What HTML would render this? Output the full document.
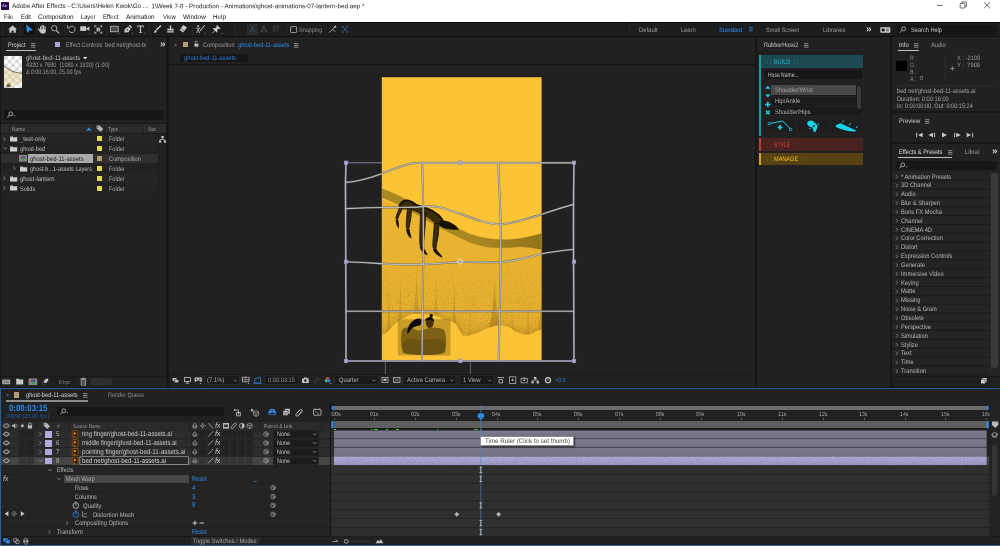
<!DOCTYPE html>
<html lang="en"><head><meta charset="utf-8"><title>Adobe After Effects</title>
<style>
html,body{margin:0;padding:0;background:#161616;}
body{width:1000px;height:546px;overflow:hidden;position:relative;font-family:"Liberation Sans",sans-serif;}
#app{position:absolute;left:0;top:0;width:1000px;height:546px;overflow:hidden;background:#161616;opacity:0.9999;}
#app div,#app svg{position:absolute;box-sizing:border-box;}
#app svg{overflow:visible;}
.t{white-space:nowrap;line-height:10px;height:10px;letter-spacing:0;transform-origin:0 50%;}
</style></head><body><div id="app">
<div style="left:0px;top:0px;width:1000px;height:22.3px;background:#ffffff;"></div>
<div style="left:1px;top:1.9px;width:8px;height:7.9px;background:#2a0a4a;border-radius:0.6px;"></div>
<div class="t" style="left:2.4px;top:1.1px;font-size:4.4px;color:#c9a6ff;transform:scaleX(0.8889) rotate(0.05deg);font-weight:bold;">Ae</div>
<div class="t" style="left:12.4px;top:1.05px;font-size:6.5px;color:#1a1a1a;transform:scaleX(0.9664) rotate(0.05deg);">Adobe After Effects - C:\Users\Helen Kwok\Go ...&nbsp; 1\Week 7-8 - Production - Animations\ghost-animations-07-lantern-bed.aep *</div>
<svg style="left:0px;top:0px;" width="1000" height="12" viewBox="0 0 1000 12"><path d="M937 5.4h5.6" stroke="#222" stroke-width="0.7" fill="none"/><rect x="960.2" y="3.3" width="4.7" height="4.7" rx="0.5" fill="none" stroke="#222" stroke-width="0.65"/><path d="M961.6 3.3v-1q0-.4 .4-.4h4q.4 0 .4 .4v4q0 .4-.4 .4h-1" fill="none" stroke="#222" stroke-width="0.65"/><path d="M984.2 2.5l5.6 5.6M989.8 2.5l-5.600 5.600" stroke="#222" stroke-width="0.7" fill="none"/></svg>
<div class="t" style="left:3.75px;top:12.4px;font-size:6.7px;color:#111;transform:scaleX(0.8336) rotate(0.05deg);">File</div>
<div class="t" style="left:20.6px;top:12.4px;font-size:6.7px;color:#111;transform:scaleX(0.8661) rotate(0.05deg);">Edit</div>
<div class="t" style="left:38.1px;top:12.4px;font-size:6.7px;color:#111;transform:scaleX(0.9573) rotate(0.05deg);">Composition</div>
<div class="t" style="left:81.25px;top:12.4px;font-size:6.7px;color:#111;transform:scaleX(0.8562) rotate(0.05deg);">Layer</div>
<div class="t" style="left:103.1px;top:12.4px;font-size:6.7px;color:#111;transform:scaleX(0.9054) rotate(0.05deg);">Effect</div>
<div class="t" style="left:126.25px;top:12.4px;font-size:6.7px;color:#111;transform:scaleX(0.9650) rotate(0.05deg);">Animation</div>
<div class="t" style="left:162.9px;top:12.4px;font-size:6.7px;color:#111;transform:scaleX(0.8818) rotate(0.05deg);">View</div>
<div class="t" style="left:182.75px;top:12.4px;font-size:6.7px;color:#111;transform:scaleX(0.9589) rotate(0.05deg);">Window</div>
<div class="t" style="left:213.1px;top:12.4px;font-size:6.7px;color:#111;transform:scaleX(0.9361) rotate(0.05deg);">Help</div>
<div style="left:0px;top:22.3px;width:1000px;height:14.4px;background:#1d1d1d;"></div>
<div style="left:0px;top:22px;width:1000px;height:1px;background:#0e0e0e;opacity:1.00;"></div>
<div style="left:0px;top:36px;width:1000px;height:1px;background:#101010;"></div>
<div style="left:24.2px;top:24.2px;width:10.6px;height:10.8px;background:#111111;"></div>
<div style="left:3px;top:24.6px;width:1px;height:10px;background:#2e2e2e;opacity:0.69;"></div>
<div style="left:20px;top:24.6px;width:1px;height:10px;background:#2e2e2e;opacity:0.69;"></div>
<div style="left:64px;top:24.6px;width:1px;height:10px;background:#2e2e2e;opacity:0.69;"></div>
<div style="left:106px;top:24.6px;width:1px;height:10px;background:#2e2e2e;opacity:0.69;"></div>
<div style="left:149px;top:24.6px;width:1px;height:10px;background:#2e2e2e;opacity:0.69;"></div>
<div style="left:192px;top:24.6px;width:1px;height:10px;background:#2e2e2e;opacity:0.69;"></div>
<div style="left:209px;top:24.6px;width:1px;height:10px;background:#2e2e2e;opacity:0.69;"></div>
<div style="left:235px;top:24.6px;width:1px;height:10px;background:#2e2e2e;opacity:0.69;"></div>
<div style="left:286px;top:24.6px;width:1px;height:10px;background:#2e2e2e;opacity:0.69;"></div>
<div style="left:246.8px;top:24.2px;width:11.2px;height:10.8px;background:#2a2a2a;"></div>
<svg style="left:0;top:0" width="1000" height="40" viewBox="0 0 1000 40"><path d="M8.2 29.2l4.4-3.8 4.4 3.8h-1.2v3.6h-2.2v-2.4h-2v2.4h-2.2v-3.6z" fill="#c8c8c8"/><path d="M26.1 24.6L27 33l2.500-2.500 3.800-.2z" fill="#2d8ceb"/><path d="M40.6 30v-3.600M42.100 30v-4.800M43.600 30v-4.600M45.100 30.400v-3.600" stroke="#c8c8c8" stroke-width="1.05" stroke-linecap="round" fill="none"/><path d="M38.500 28.900l1.900 2.700" stroke="#c8c8c8" stroke-width="1.2" stroke-linecap="round"/><path d="M40 29.400h5.700v2.200c0 1-.8 1.900-1.900 1.900h-1.700c-.8 0-1.400-.4-1.800-1z" fill="#c8c8c8"/><circle cx="54.2" cy="28.2" r="2.7" fill="none" stroke="#c8c8c8" stroke-width="0.8"/><path d="M56.2 30.3l3 3.1" stroke="#c8c8c8" stroke-width="1.1"/><path d="M69.6 27.2a3.2 3.2 0 1 1-0.6 3.6" fill="none" stroke="#c8c8c8" stroke-width="0.8"/><path d="M67.6 25.4v2.6h2.6" fill="none" stroke="#c8c8c8" stroke-width="0.8"/><rect x="80.2" y="26.2" width="6" height="4.8" rx="0.8" fill="#c8c8c8"/><path d="M86.4 28.4l3-1.8v4.2l-3-1.6z" fill="#c8c8c8"/><path d="M88.6 33.6h1.2v-1.2z" fill="#999"/><path d="M94.4 25.6h2v.8h-1.2v1.2h-.8zM100.2 25.6h2v2h-.8v-1.2h-1.2zM94.4 31.4h.8v1.2h1.2v.8h-2zM101.4 31.4h.8v2h-2v-.8h1.2z" fill="#c8c8c8"/><path d="M96.4 27.6h3.8v3.8h-3.8z" fill="#c8c8c8" opacity="0.8"/><rect x="110.6" y="26.2" width="7.6" height="5.6" fill="#4a4a4a" stroke="#c8c8c8" stroke-width="0.7"/><path d="M118.2 33.8h1.2v-1.2z" fill="#999"/><path d="M124.2 32.6l.6-3.6 3.4-2.6 2.6 2.6-2.6 3.2zM128.8 25.8l1-1 2.4 2.4-1 1z" fill="#c8c8c8"/><circle cx="127.2" cy="29.8" r="0.7" fill="#1d1d1d"/><path d="M131.6 33.8h1.2v-1.2z" fill="#999"/><path d="M137.2 25.6h6.6v1.8h-.7v-1h-2v5.6h1v.7h-3.2v-.7h1v-5.6h-2v1h-.7z" fill="#c8c8c8"/><path d="M144.4 33.8h1.2v-1.2z" fill="#999"/><path d="M160.4 25l1 1-4.4 4.6-1.2-1.2z" fill="#c8c8c8"/><path d="M155.4 29.8l1.4 1.4c-.4 1.4-1.8 1.8-3.2 1.6 1-.6.8-2.2 1.8-3z" fill="#c8c8c8"/><path d="M169.6 25.4h1.8l-.3 3.4h2.6v1.6h-6.4v-1.6h2.6zM167.2 31.2h6.6v1.2h-6.6z" fill="#c8c8c8"/><path d="M183.4 25l3.6 2.6-3.8 5-3.6-2.6z" fill="#c8c8c8"/><path d="M181.2 28.6l3.4 2.6" stroke="#1d1d1d" stroke-width="0.5"/><circle cx="198.2" cy="26" r="0.9" fill="#c8c8c8"/><path d="M195.8 28.2h4l-1.2.6v1.6l1 2.6M198.2 29l-1.6 4" stroke="#c8c8c8" stroke-width="0.8" fill="none"/><path d="M204.4 25l.6.6-4.2 5.2-1.2.6.4-1.2z" fill="#c8c8c8"/><path d="M204.4 33.8h1.2v-1.2z" fill="#999"/><path d="M217 25l3.6 3.6-.8.4-1-.4-1.6 1.6.2 1.8-.6.6-1.8-1.8-2.4 2.4-.4-.4 2.4-2.4-1.8-1.8.6-.6 1.8.2 1.6-1.6-.4-1z" fill="#c8c8c8"/><path d="M221.6 33.8h1.2v-1.2z" fill="#999"/><path d="M252.4 26v3.6l-3 2.4M252.4 29.6l3 2.4" stroke="#2a5f94" stroke-width="0.8" fill="none"/><path d="M263.8 25.6l-3.2 6.2h6.4zM263.8 29.4v-3.6M263.8 29.4l-3 2.2M263.8 29.4l3 2.2" stroke="#4a4a4a" stroke-width="0.7" fill="none"/><path d="M273.4 26.2h4.6v4.6h-4.6zM275.4 28.4l3.6-3M275.4 28.4l-2.4 3.6" stroke="#4a4a4a" stroke-width="0.7" fill="none"/><rect x="290.6" y="26.6" width="6" height="6" rx="0.8" fill="none" stroke="#b8b8b8" stroke-width="0.8"/><path d="M329.2 32.6l3.4-3.4 2.6 2.6M332.6 29.2l2.8-2.8" stroke="#c8c8c8" stroke-width="0.8" fill="none"/><rect x="334.4" y="25.8" width="1.8" height="1.8" fill="#c8c8c8"/><path d="M342.2 26.4h1.6M342.2 26.4v1.4M347.8 26.4h-1.6M347.8 26.4v1.4M342.2 32.2h1.6M342.2 32.2v-1.4M347.8 32.2h-1.6M347.8 32.2v-1.4M343.6 27.6l2.8 3.4M346.4 27.6l-2.8 3.4" stroke="#2a6fb5" stroke-width="0.8" fill="none"/></svg>
<div class="t" style="left:299.4px;top:24.8px;font-size:6.6px;color:#8a8a8a;transform:scaleX(0.8389) rotate(0.05deg);">Snapping</div>
<div style="left:626px;top:23.2px;width:1px;height:12.8px;background:#161616;"></div>
<div class="t" style="left:638.6px;top:24.9px;font-size:6.4px;color:#9a9a9a;transform:scaleX(0.9172) rotate(0.05deg);">Default</div>
<div class="t" style="left:681.2px;top:24.9px;font-size:6.4px;color:#9a9a9a;transform:scaleX(0.8919) rotate(0.05deg);">Learn</div>
<div class="t" style="left:718.9px;top:24.9px;font-size:6.4px;color:#2d8ceb;transform:scaleX(0.8970) rotate(0.05deg);">Standard</div>
<svg style="left:749.4px;top:27.4px;" width="4" height="4.4" viewBox="0 0 4 4.4"><path d="M0 .5h3.8M0 2.2h3.8M0 3.9h3.8" stroke="#2d8ceb" stroke-width="0.7"/></svg>
<div class="t" style="left:765.6px;top:24.9px;font-size:6.4px;color:#9a9a9a;transform:scaleX(0.8776) rotate(0.05deg);">Small Screen</div>
<div class="t" style="left:822.8px;top:24.9px;font-size:6.4px;color:#9a9a9a;transform:scaleX(0.9208) rotate(0.05deg);">Libraries</div>
<div class="t" style="left:866.4px;top:23.9px;font-size:10px;color:#d8d8d8;transform:scaleX(1.0067) rotate(0.05deg);font-weight:bold;">&#187;</div>
<svg style="left:880px;top:26.6px;" width="10.6" height="6" viewBox="0 0 10.6 6"><rect x="0.3" y="0.3" width="10" height="5.4" rx="0.6" fill="#d0d0d0"/><rect x="1.6" y="1.6" width="3.2" height="2.8" fill="#1d1d1d"/><path d="M6 2h3M6 3.8h3" stroke="#1d1d1d" stroke-width="0.7"/></svg>
<div style="left:896.6px;top:24.6px;width:100.4px;height:10.2px;background:#161616;border-radius:1px;"></div>
<svg style="left:899.4px;top:26.4px;" width="8" height="7" viewBox="0 0 8 7"><circle cx="4.6" cy="2.8" r="2" fill="none" stroke="#c0c0c0" stroke-width="0.8"/><path d="M3.2 4.2l-2.4 2.4" stroke="#c0c0c0" stroke-width="0.9"/></svg>
<div class="t" style="left:911.2px;top:24.9px;font-size:6.6px;color:#c4c4c4;transform:scaleX(0.8535) rotate(0.05deg);">Search Help</div>
<div style="left:1px;top:37.2px;width:165.4px;height:350.2px;background:#212121;"></div>
<div class="t" style="left:7.8px;top:39.8px;font-size:6.6px;color:#d8d8d8;transform:scaleX(0.8519) rotate(0.05deg);">Project</div>
<div style="left:6.2px;top:50px;width:29.6px;height:1px;background:#d0d0d0;opacity:0.92;"></div>
<svg style="left:31px;top:42.6px;" width="5" height="5" viewBox="0 0 5 5"><path d="M0 .7h4.400M0 2.450h4.400M0 4.200h4.400" stroke="#a4a4a4" stroke-width="0.800"/></svg>
<div style="left:54.6px;top:41.6px;width:5.6px;height:5.6px;background:#a9a6d6;"></div>
<div class="t" style="left:65.8px;top:39.8px;font-size:6.6px;color:#9a9a9a;transform:scaleX(0.8386) rotate(0.05deg);">Effect Controls</div>
<div style="left:105px;top:39.8px;width:41.2px;height:10px;overflow:hidden;"><div class="t" style="left:0;top:0;font-size:6.6px;color:#9a9a9a;transform:scaleX(0.8801) rotate(0.05deg);">bed net/ghost-be</div></div>
<div style="left:146px;top:39.4px;width:1px;height:10.4px;background:#333;opacity:0.57;"></div>
<div class="t" style="left:159.8px;top:38.9px;font-size:10px;color:#d8d8d8;transform:scaleX(1.0067) rotate(0.05deg);font-weight:bold;">&#187;</div>
<svg style="left:4.1px;top:55.8px;overflow:hidden" width="18.4" height="32.6" viewBox="0 0 18.4 32.6"><rect width="18.4" height="32.6" fill="#fff"/><rect x="0" y="0" width="3.7" height="3.7" fill="#d8d8d8"/><rect x="7.4" y="0" width="3.7" height="3.7" fill="#d8d8d8"/><rect x="14.8" y="0" width="3.7" height="3.7" fill="#d8d8d8"/><rect x="3.7" y="3.7" width="3.7" height="3.7" fill="#d8d8d8"/><rect x="11.1" y="3.7" width="3.7" height="3.7" fill="#d8d8d8"/><rect x="0" y="7.4" width="3.7" height="3.7" fill="#d8d8d8"/><rect x="7.4" y="7.4" width="3.7" height="3.7" fill="#d8d8d8"/><rect x="14.8" y="7.4" width="3.7" height="3.7" fill="#d8d8d8"/><rect x="3.7" y="11.1" width="3.7" height="3.7" fill="#d8d8d8"/><rect x="11.1" y="11.1" width="3.7" height="3.7" fill="#d8d8d8"/><rect x="0" y="14.8" width="3.7" height="3.7" fill="#d8d8d8"/><rect x="7.4" y="14.8" width="3.7" height="3.7" fill="#d8d8d8"/><rect x="14.8" y="14.8" width="3.7" height="3.7" fill="#d8d8d8"/><rect x="3.7" y="18.5" width="3.7" height="3.7" fill="#d8d8d8"/><rect x="11.1" y="18.5" width="3.7" height="3.7" fill="#d8d8d8"/><rect x="0" y="22.2" width="3.7" height="3.7" fill="#d8d8d8"/><rect x="7.4" y="22.2" width="3.7" height="3.7" fill="#d8d8d8"/><rect x="14.8" y="22.2" width="3.7" height="3.7" fill="#d8d8d8"/><rect x="3.7" y="25.9" width="3.7" height="3.7" fill="#d8d8d8"/><rect x="11.1" y="25.9" width="3.7" height="3.7" fill="#d8d8d8"/><rect x="0" y="29.6" width="3.7" height="3.7" fill="#d8d8d8"/><rect x="7.4" y="29.6" width="3.7" height="3.7" fill="#d8d8d8"/><rect x="14.8" y="29.6" width="3.7" height="3.7" fill="#d8d8d8"/><path d="M0 10.400C4 12.800 7 15.200 10 16C13 16.800 16 17.200 18.400 17.600V26C16 29.600 13 27.600 11 28.400C9 30 7 30.400 4 29.600L0 30.400Z" fill="#e2cf98" opacity="0.5"/><path d="M0 10.200C4 12.600 7 15 10 15.800C13 16.600 16 17 18.400 17.400" stroke="#5a4a20" stroke-width="0.9" fill="none" opacity="0.85"/><path d="M2.400 31.200c0-2.600 1-3.800 2.200-3.800s2.200 1.200 2.200 3.800z" fill="#5a4a1e" opacity="0.85"/></svg>
<div class="t" style="left:25.8px;top:53.2px;font-size:6.7px;color:#c0c0c0;transform:scaleX(0.8963) rotate(0.05deg);">ghost-bed-11-assets</div>
<svg style="left:83.2px;top:56.6px;" width="4.4" height="3" viewBox="0 0 4.4 3"><path d="M0 0h4.2l-2.1 2.6z" fill="#e0e0e0"/></svg>
<div class="t" style="left:25.8px;top:59.7px;font-size:6.5px;color:#9c9c9c;transform:scaleX(0.8505) rotate(0.05deg);">4320 x 7680&nbsp; (1080 x 1920) (1.00)</div>
<div class="t" style="left:25.8px;top:66.8px;font-size:6.5px;color:#9c9c9c;transform:scaleX(0.8255) rotate(0.05deg);">&#916; 0:00:16:00, 25.00 fps</div>
<div style="left:4px;top:110.2px;width:159.4px;height:9.4px;background:#161616;border-radius:1px;"></div>
<svg style="left:7.4px;top:111.4px;" width="9" height="7" viewBox="0 0 9 7"><circle cx="3.8" cy="2.8" r="1.9" fill="none" stroke="#c0c0c0" stroke-width="0.8"/><path d="M2.4 4.2l-2 2.2" stroke="#c0c0c0" stroke-width="0.9"/><path d="M6.4 4.4h2l-1 1.2z" fill="#c0c0c0"/></svg>
<div style="left:1px;top:123px;width:165.4px;height:1px;background:#161616;opacity:0.69;"></div>
<div style="left:1px;top:123.8px;width:165.4px;height:9.6px;background:#2b2b2b;"></div>
<div style="left:1px;top:133px;width:165.4px;height:1px;background:#161616;opacity:0.69;"></div>
<div style="left:9px;top:124.6px;width:1px;height:8px;background:#1a1a1a;opacity:0.57;"></div>
<div style="left:94px;top:124.6px;width:1px;height:8px;background:#1a1a1a;opacity:0.57;"></div>
<div style="left:104px;top:124.6px;width:1px;height:8px;background:#1a1a1a;opacity:0.57;"></div>
<div style="left:143px;top:124.6px;width:1px;height:8px;background:#1a1a1a;opacity:0.57;"></div>
<div class="t" style="left:11.7px;top:124px;font-size:5.8px;color:#9a9a9a;transform:scaleX(0.8596) rotate(0.05deg);">Name</div>
<svg style="left:85.6px;top:126.6px;" width="6" height="4" viewBox="0 0 6 4"><path d="M0 3.4l2.8-3 2.8 3z" fill="#2d8ceb"/></svg>
<svg style="left:95.6px;top:125.2px;" width="8" height="7" viewBox="0 0 8 7"><path d="M0.6 0.6h3l3.6 3.4-2.6 2.8-4-3.6z" fill="#b8b8b8"/><circle cx="1.9" cy="1.9" r="0.6" fill="#2b2b2b"/></svg>
<div class="t" style="left:107.6px;top:124px;font-size:5.8px;color:#9a9a9a;transform:scaleX(0.8271) rotate(0.05deg);">Type</div>
<div class="t" style="left:122.4px;top:124.6px;font-size:5.6px;color:#2d6fb0;transform:scaleX(0.8850) rotate(0.05deg);">.</div>
<div class="t" style="left:147.8px;top:124px;font-size:5.8px;color:#9a9a9a;transform:scaleX(0.7179) rotate(0.05deg);">Size</div>
<div class="t" style="left:160.4px;top:124.6px;font-size:5.6px;color:#2d6fb0;transform:scaleX(0.8850) rotate(0.05deg);">.</div>
<div style="left:1px;top:134px;width:157px;height:9.4px;background:#252525;"></div>
<svg style="left:3.4px;top:136.75px;" width="3" height="5" viewBox="0 0 3 5"><path d="M0.4 0.4l1.8 1.8-1.8 1.8" stroke="#9a9a9a" stroke-width="0.7" fill="none"/></svg>
<svg style="left:9.8px;top:135.95px;" width="8" height="6" viewBox="0 0 8 6"><path d="M0 .4h2.8l.6.8h3.8v4.4h-7.2z" fill="#cfcfcf"/><path d="M0 1.6h7.2" stroke="#9a9a9a" stroke-width="0.4"/></svg>
<div class="t" style="left:19.8px;top:134.15px;font-size:6.6px;color:#bcbcbc;transform:scaleX(0.9017) rotate(0.05deg);">_test-only</div>
<div style="left:97.2px;top:136.2px;width:5.2px;height:5.2px;background:#e4d84c;"></div>
<div class="t" style="left:108.85px;top:134.15px;font-size:6.6px;color:#aaaaaa;transform:scaleX(0.8365) rotate(0.05deg);">Folder</div>
<div style="left:1px;top:143.9px;width:157px;height:9.4px;background:#222222;"></div>
<svg style="left:3px;top:147.45px;" width="5" height="3" viewBox="0 0 5 3"><path d="M0.4 0.4l1.8 1.8 1.8-1.8" stroke="#9a9a9a" stroke-width="0.7" fill="none"/></svg>
<svg style="left:9.8px;top:145.85px;" width="8" height="6" viewBox="0 0 8 6"><path d="M0 .4h2.8l.6.8h3.8v4.4h-7.2z" fill="#cfcfcf"/><path d="M0 1.6h7.2" stroke="#9a9a9a" stroke-width="0.4"/></svg>
<div class="t" style="left:19.8px;top:144.05px;font-size:6.6px;color:#bcbcbc;transform:scaleX(0.8618) rotate(0.05deg);">ghost-bed</div>
<div style="left:97.2px;top:146.1px;width:5.2px;height:5.2px;background:#e4d84c;"></div>
<div class="t" style="left:108.85px;top:144.05px;font-size:6.6px;color:#aaaaaa;transform:scaleX(0.8365) rotate(0.05deg);">Folder</div>
<div style="left:1px;top:153.8px;width:157px;height:9.4px;background:#252525;"></div>
<div style="left:1px;top:153.8px;width:157px;height:9.4px;background:#2f2f2f;"></div>
<div style="left:28px;top:154px;width:65.4px;height:9px;background:#aaaaaa;"></div>
<svg style="left:19.4px;top:155.4px;" width="8" height="6.4" viewBox="0 0 8 6.4"><rect width="8" height="6.4" rx="0.6" fill="#8c8c8c"/><circle cx="3" cy="2.6" r="1.4" fill="#d03030"/><circle cx="5" cy="2.6" r="1.4" fill="#3050d0"/><circle cx="4" cy="4.2" r="1.4" fill="#30a040"/></svg>
<div class="t" style="left:30.1px;top:153.95px;font-size:6.6px;color:#1a1a1a;transform:scaleX(0.9015) rotate(0.05deg);">ghost-bed-11-assets</div>
<div style="left:97.2px;top:156px;width:5.2px;height:5.2px;background:#b59e76;"></div>
<div class="t" style="left:108.85px;top:153.95px;font-size:6.6px;color:#aaaaaa;transform:scaleX(0.8737) rotate(0.05deg);">Composition</div>
<div style="left:1px;top:163.7px;width:157px;height:9.4px;background:#222222;"></div>
<svg style="left:13.4px;top:166.45px;" width="3" height="5" viewBox="0 0 3 5"><path d="M0.4 0.4l1.8 1.8-1.8 1.8" stroke="#9a9a9a" stroke-width="0.7" fill="none"/></svg>
<svg style="left:19.8px;top:165.65px;" width="8" height="6" viewBox="0 0 8 6"><path d="M0 .4h2.8l.6.8h3.8v4.4h-7.2z" fill="#cfcfcf"/><path d="M0 1.6h7.2" stroke="#9a9a9a" stroke-width="0.4"/></svg>
<div class="t" style="left:30.1px;top:163.85px;font-size:6.6px;color:#bcbcbc;transform:scaleX(0.8367) rotate(0.05deg);">ghost-b...1-assets Layers</div>
<div style="left:97.2px;top:165.9px;width:5.2px;height:5.2px;background:#e4d84c;"></div>
<div class="t" style="left:108.85px;top:163.85px;font-size:6.6px;color:#aaaaaa;transform:scaleX(0.8365) rotate(0.05deg);">Folder</div>
<div style="left:1px;top:173.6px;width:157px;height:9.4px;background:#252525;"></div>
<svg style="left:3.4px;top:176.35px;" width="3" height="5" viewBox="0 0 3 5"><path d="M0.4 0.4l1.8 1.8-1.8 1.8" stroke="#9a9a9a" stroke-width="0.7" fill="none"/></svg>
<svg style="left:9.8px;top:175.55px;" width="8" height="6" viewBox="0 0 8 6"><path d="M0 .4h2.8l.6.8h3.8v4.4h-7.2z" fill="#cfcfcf"/><path d="M0 1.6h7.2" stroke="#9a9a9a" stroke-width="0.4"/></svg>
<div class="t" style="left:19.8px;top:173.75px;font-size:6.6px;color:#bcbcbc;transform:scaleX(0.8942) rotate(0.05deg);">ghost-lantern</div>
<div style="left:97.2px;top:175.8px;width:5.2px;height:5.2px;background:#e4d84c;"></div>
<div class="t" style="left:108.85px;top:173.75px;font-size:6.6px;color:#aaaaaa;transform:scaleX(0.8365) rotate(0.05deg);">Folder</div>
<div style="left:1px;top:183.5px;width:157px;height:9.4px;background:#222222;"></div>
<svg style="left:3.4px;top:186.25px;" width="3" height="5" viewBox="0 0 3 5"><path d="M0.4 0.4l1.8 1.8-1.8 1.8" stroke="#9a9a9a" stroke-width="0.7" fill="none"/></svg>
<svg style="left:9.8px;top:185.45px;" width="8" height="6" viewBox="0 0 8 6"><path d="M0 .4h2.8l.6.8h3.8v4.4h-7.2z" fill="#cfcfcf"/><path d="M0 1.6h7.2" stroke="#9a9a9a" stroke-width="0.4"/></svg>
<div class="t" style="left:19.8px;top:183.65px;font-size:6.6px;color:#bcbcbc;transform:scaleX(0.8455) rotate(0.05deg);">Solids</div>
<div style="left:97.2px;top:185.7px;width:5.2px;height:5.2px;background:#e4d84c;"></div>
<div class="t" style="left:108.85px;top:183.65px;font-size:6.6px;color:#aaaaaa;transform:scaleX(0.8365) rotate(0.05deg);">Folder</div>
<svg style="left:158.6px;top:135.6px;" width="7" height="7" viewBox="0 0 7 7"><rect x="2.4" y="0" width="2.2" height="2.2" fill="#c8c8c8"/><rect x="0" y="4.4" width="2.2" height="2.2" fill="#c8c8c8"/><rect x="4.8" y="4.4" width="2.2" height="2.2" fill="#c8c8c8"/><path d="M3.5 2v1.6M1.1 4.4v-.9h4.8v.9" stroke="#c8c8c8" stroke-width="0.6" fill="none"/></svg>
<div style="left:158px;top:134px;width:1px;height:246px;background:#1c1c1c;opacity:0.57;"></div>
<div style="left:1px;top:376px;width:165.4px;height:1px;background:#161616;opacity:0.69;"></div>
<svg style="left:0;top:0" width="170" height="390" viewBox="0 0 170 390"><rect x="2.2" y="379.6" width="8" height="4.6" rx="1" fill="#a8a8a8"/><path d="M3.4 381h5.6M3.4 382.6h5.6" stroke="#444" stroke-width="0.5"/><path d="M16.2 378.8h2.6l.6.8h3.8v4.8h-7z" fill="#c8c8c8"/><rect x="28.6" y="378.6" width="8.6" height="6.4" rx="0.6" fill="#8c8c8c"/><circle cx="32" cy="381" r="1.4" fill="#d03030"/><circle cx="34" cy="381" r="1.4" fill="#3050d0"/><circle cx="33" cy="382.8" r="1.4" fill="#30a040"/><path d="M47.6 378.4c-2 .2-3.4 1.6-4 3.4l1.4 1.4c1.8-.6 3.2-2 3.4-4zM43 382.4l-1.2.4.8.8zM44.6 384l-.4 1.2.8-.8z" fill="#c8c8c8"/><rect x="53.4" y="378.2" width="23.4" height="7.4" fill="#1e1e1e"/><path d="M81.2 379.4h4.4v5.8h-4.4zM80.6 378.8h5.6M82.4 378.2h2" fill="none" stroke="#b8b8b8" stroke-width="0.8"/><path d="M82.4 380.4v3.8M83.4 380.4v3.8M84.4 380.4v3.8" stroke="#b8b8b8" stroke-width="0.4"/><rect x="91" y="378" width="21.6" height="7.6" rx="3.8" fill="#2e2e2e"/></svg>
<div class="t" style="left:58.6px;top:377.2px;font-size:5.4px;color:#8a8a8a;transform:scaleX(0.8850) rotate(0.05deg);">8 bpc</div>
<div class="t" style="left:74px;top:377.8px;font-size:5.4px;color:#2d6fb0;transform:scaleX(0.8850) rotate(0.05deg);">.</div>
<div style="left:168.8px;top:37.2px;width:586.2px;height:350.2px;background:#212121;"></div>
<div class="t" style="left:174.4px;top:39.6px;font-size:6px;color:#8a8a8a;transform:scaleX(0.8850) rotate(0.05deg);">&#215;</div>
<div style="left:182.8px;top:41.6px;width:5.4px;height:5.6px;background:#b59e76;"></div>
<svg style="left:193.6px;top:41.2px;" width="5" height="6" viewBox="0 0 5 6"><rect x="0.4" y="2.6" width="4" height="3" fill="#c0c0c0"/><path d="M1.2 2.6v-1.2a1.2 1.2 0 0 1 2.4 0" fill="none" stroke="#c0c0c0" stroke-width="0.7"/></svg>
<div class="t" style="left:203.1px;top:39.8px;font-size:6.6px;color:#9a9a9a;transform:scaleX(0.8614) rotate(0.05deg);">Composition</div>
<div class="t" style="left:237.5px;top:39.8px;font-size:6.6px;color:#2d8ceb;transform:scaleX(0.8630) rotate(0.05deg);">ghost-bed-11-assets</div>
<svg style="left:294.4px;top:42.6px;" width="5" height="5" viewBox="0 0 5 5"><path d="M0 .7h4.400M0 2.450h4.400M0 4.200h4.400" stroke="#a4a4a4" stroke-width="0.800"/></svg>
<div style="left:180px;top:53.8px;width:68px;height:8.6px;background:#161616;"></div>
<div class="t" style="left:184px;top:53.2px;font-size:6.6px;color:#2d7fd8;transform:scaleX(0.8714) rotate(0.05deg);">ghost-bed-11-assets</div>
<div style="left:168.8px;top:64px;width:586.2px;height:1px;background:#111;opacity:0.80;"></div>
<svg style="left:0;top:0" width="1000" height="390" viewBox="0 0 1000 390"><rect x="381.8" y="77.2" width="159.8" height="283.2" fill="#fdc337"/><defs><clipPath id="cy"><rect x="381.8" y="77.2" width="159.8" height="283.2"/></clipPath><clipPath id="cn"><path d="M381.8 199 L398.6 206 L436 225 L462.4 237 L480 243.6 L502 245.8 L524 244.8 L541.6 249 L541.6 329.6 C539 330.4 537 331 535.5 331.5 C531 334.4 527 335.4 523.5 334.5 C520 333.6 518 332.6 515.4 331.5 C512 329 510 327.4 507 326.5 C504 325.4 501 325.2 498 325.5 C495 325.8 492 326.4 489 327.5 C484 329.6 480 332.4 475 333.5 C471 335.6 467 336.4 463 335.5 C460 333 458 327 455.5 323.5 C452 320.6 448 319.8 443.5 319.4 C440 317 438 316 435.4 315.4 C428 313.6 420 313.4 413 313.8 C410 314.6 408 316 405 317.4 C401 319 398 321 395 323.5 C391 328 387 333 381.8 335.5 Z"/></clipPath><linearGradient id="netg" gradientUnits="userSpaceOnUse" x1="0" y1="200" x2="0" y2="335"><stop offset="0" stop-color="#7a5a08" stop-opacity="0.13"/><stop offset="0.45" stop-color="#7a5a08" stop-opacity="0.15"/><stop offset="1" stop-color="#7a5a08" stop-opacity="0.2"/></linearGradient><linearGradient id="spg" gradientUnits="userSpaceOnUse" x1="0" y1="200" x2="0" y2="335"><stop offset="0" stop-color="#fff" stop-opacity="0.06"/><stop offset="0.42" stop-color="#fff" stop-opacity="0.2"/><stop offset="0.6" stop-color="#fff" stop-opacity="0.7"/><stop offset="1" stop-color="#fff" stop-opacity="1"/></linearGradient><mask id="spm" maskUnits="userSpaceOnUse" x="380" y="180" width="164" height="182"><rect x="380" y="180" width="164" height="182" fill="url(#spg)"/></mask><filter id="spk" x="0" y="0" width="100%" height="100%" color-interpolation-filters="sRGB"><feTurbulence type="fractalNoise" baseFrequency="1.6" numOctaves="1" seed="7" result="n"/><feColorMatrix in="n" type="matrix" values="0 0 0 0 0.30  0 0 0 0 0.21  0 0 0 0 0.02  -6 0 0 0 2.85"/></filter></defs><g clip-path="url(#cy)"><path d="M381.8 199 L398.6 206 L436 225 L462.4 237 L480 243.6 L502 245.8 L524 244.8 L541.6 249 L541.6 329.6 C539 330.4 537 331 535.5 331.5 C531 334.4 527 335.4 523.5 334.5 C520 333.6 518 332.6 515.4 331.5 C512 329 510 327.4 507 326.5 C504 325.4 501 325.2 498 325.5 C495 325.8 492 326.4 489 327.5 C484 329.6 480 332.4 475 333.5 C471 335.6 467 336.4 463 335.5 C460 333 458 327 455.5 323.5 C452 320.6 448 319.8 443.5 319.4 C440 317 438 316 435.4 315.4 C428 313.6 420 313.4 413 313.8 C410 314.6 408 316 405 317.4 C401 319 398 321 395 323.5 C391 328 387 333 381.8 335.5 Z" fill="url(#netg)"/><path d="M389.0 274 C389.3 310.0 390.5 326 391.5 334 L386.5 334 C387.5 326 388.7 310.0 389.0 274 Z" fill="#6e520a" opacity="0.16" clip-path="url(#cn)"/><path d="M400.6 270 C400.90000000000003 301.2 402.1 314 403.1 322 L398.1 322 C399.1 314 400.3 301.2 400.6 270 Z" fill="#6e520a" opacity="0.16" clip-path="url(#cn)"/><path d="M416.6 265 C416.90000000000003 295.6 418.70000000000005 308 420.1 316 L413.1 316 C414.5 308 416.3 295.6 416.6 265 Z" fill="#6e520a" opacity="0.2" clip-path="url(#cn)"/><path d="M436.0 276 C436.3 300.6 437.5 309 438.5 317 L433.5 317 C434.5 309 435.7 300.6 436.0 276 Z" fill="#6e520a" opacity="0.16" clip-path="url(#cn)"/><path d="M454.4 274 C454.7 305.2 455.71999999999997 318 456.59999999999997 326 L452.2 326 C453.08 318 454.09999999999997 305.2 454.4 274 Z" fill="#6e520a" opacity="0.2" clip-path="url(#cn)"/><path d="M470.0 290 C470.3 316.4 471.5 326 472.5 334 L467.5 334 C468.5 326 469.7 316.4 470.0 290 Z" fill="#6e520a" opacity="0.08" clip-path="url(#cn)"/><path d="M494.6 274 C494.90000000000003 307.0 498.20000000000005 321 500.6 329 L488.6 329 C491.0 321 494.3 307.0 494.6 274 Z" fill="#6e520a" opacity="0.3" clip-path="url(#cn)"/><path d="M512.0 300 C512.3 319.2 513.8 324 515.0 332 L509.0 332 C510.2 324 511.7 319.2 512.0 300 Z" fill="#6e520a" opacity="0.1" clip-path="url(#cn)"/><path d="M528.0 295 C528.3 318.4 529.8 326 531.0 334 L525.0 334 C526.2 326 527.7 318.4 528.0 295 Z" fill="#6e520a" opacity="0.1" clip-path="url(#cn)"/><path d="M541.4 286 C541.6999999999999 313.0 543.8 323 545.4 331 L537.4 331 C539.0 323 541.1 313.0 541.4 286 Z" fill="#6e520a" opacity="0.2" clip-path="url(#cn)"/><filter id="bl3" x="-10%" y="-50%" width="120%" height="200%"><feGaussianBlur stdDeviation="3.2"/></filter><g clip-path="url(#cn)"><path d="M381.8 337.5 C387 335 391 330 395 325.5 C398 323 401 321 405 319.4 C408 318 410 316.6 413 315.8 C420 315.4 428 315.6 435.4 317.4 C438 318 440 319 443.5 321.4 C448 321.8 452 322.6 455.5 325.5 C458 329 460 335 463 337.5 C467 338.4 471 337.6 475 335.5 C480 334.4 484 331.6 489 329.5 C492 328.4 495 327.8 498 327.5 C501 327.2 504 327.4 507 328.5 C510 329.4 512 331 515.4 333.5 C518 334.6 520 335.6 523.5 336.5 C527 337.4 531 336.4 535.5 333.5 C537 333 539 332.4 541.6 331.6" fill="none" stroke="#6a4e08" stroke-width="9" opacity="0.2" filter="url(#bl3)"/></g><g clip-path="url(#cn)"><g mask="url(#spm)"><rect x="381.8" y="190" width="160" height="150" filter="url(#spk)" opacity="0.14"/></g></g><path d="M381.8 188.6 L391.5 192.4 L400 196.2 L420 206.6 L438.8 217.4 L458.7 229 L470 234 L480 237 L490 238.8 L500 239.7 L510 239.4 L520 238.5 L530 236.6 L541.6 233.6 L541.6 249.4 L530 247.6 L520 246.8 L510 247.6 L500 247.8 L490 247.4 L480 245.6 L470 242.6 L461.3 238.6 L450 233 L438.8 227 L420 216.4 L400 205.4 L391.5 201.4 L381.8 197.6 Z" fill="#ab8922" stroke="#ab8922" stroke-width="0.3" stroke-linejoin="round"/><linearGradient id="armg" gradientUnits="userSpaceOnUse" x1="470" y1="0" x2="541" y2="0"><stop offset="0" stop-color="#5a4408" stop-opacity="0"/><stop offset="1" stop-color="#5a4408" stop-opacity="0.32"/></linearGradient><path d="M381.8 188.6 L391.5 192.4 L400 196.2 L420 206.6 L438.8 217.4 L458.7 229 L470 234 L480 237 L490 238.8 L500 239.7 L510 239.4 L520 238.5 L530 236.6 L541.6 233.6 L541.6 249.4 L530 247.6 L520 246.8 L510 247.6 L500 247.8 L490 247.4 L480 245.6 L470 242.6 L461.3 238.6 L450 233 L438.8 227 L420 216.4 L400 205.4 L391.5 201.4 L381.8 197.6 Z" fill="url(#armg)"/><path d="M399.2 205.4 C401 201.6 405 199.8 408.6 200.4 C411.8 201 414 203 416 204.6 L425.4 207.6 C430 209 435 212 438.6 215 C440.6 216.8 442 218.6 442.6 220.4 L441 225 L436.4 224.6 L427 217 L414 211 L407 209.4 L401.4 209.4 Z" fill="#3c2d09"/><path d="M399.4 205.6 C401.2 201.8 405 200 408.6 200.6 C411.8 201.2 414 203.2 416 204.8 L425.4 207.8 C430 209.2 435 212.2 438.6 215.2 C440.6 217 442 218.8 442.6 220.6" fill="none" stroke="#171005" stroke-width="1.9" stroke-linecap="round"/><path d="M399.3 206.6 C398.5 212.89999999999998 395.5 215.2 396.1 219.2 L397.9 219.2 C398.2 214.2 402.3 212.89999999999998 401.90000000000003 206.6 Z" fill="#3c2d09" stroke="#171005" stroke-width="0.9" stroke-linejoin="round"/><path d="M395.70000000000005 219.89999999999998 C396.1 224.0 396.8 226.4 399.0 228.8 C398.8 225.20000000000002 399.09999999999997 224.0 398.2 219.89999999999998 Z" fill="#171005"/><path d="M407.5 208.0 C406.7 218.1 405.9 224.2 406.5 228.2 L409.1 228.2 C409.40000000000003 223.2 411.69999999999993 218.1 411.29999999999995 208.0 Z" fill="#3c2d09" stroke="#171005" stroke-width="0.9" stroke-linejoin="round"/><path d="M406.1 228.89999999999998 C406.5 233.5 408.40000000000003 236.4 411.4 238.8 C411.2 235.20000000000002 410.3 233.5 409.40000000000003 228.89999999999998 Z" fill="#171005"/><path d="M420.7 212.6 C419.9 229.1 419.5 241.6 420.1 245.6 L423.1 245.6 C423.40000000000003 240.6 425.7 229.1 425.3 212.6 Z" fill="#3c2d09" stroke="#171005" stroke-width="0.9" stroke-linejoin="round"/><path d="M419.70000000000005 246.29999999999998 C420.1 250.6 423.40000000000003 253.2 427.6 255.6 C427.40000000000003 252.0 424.3 250.6 423.40000000000003 246.29999999999998 Z" fill="#171005"/><path d="M434.40000000000003 223.4 C433.6 235.5 432.5 243.6 433.1 247.6 L436.1 247.6 C436.40000000000003 242.6 439.2 235.5 438.8 223.4 Z" fill="#3c2d09" stroke="#171005" stroke-width="0.9" stroke-linejoin="round"/><path d="M432.70000000000005 248.29999999999998 C433.1 252.7 437.3 255.4 442.4 257.8 C442.2 254.20000000000002 437.3 252.7 436.40000000000003 248.29999999999998 Z" fill="#171005"/><path d="M439.6 221.4 C442.6 220.2 446.6 220.6 450 222.2 C453.6 223.8 456.8 226.4 459.2 229.4 C455 230.2 450 229.8 446 228.8 C443 228 440.6 226.6 439.2 225.2 Z" fill="#171005"/><rect x="397.8" y="319.2" width="52.6" height="36.4" rx="1" fill="#7a5e10" opacity="0.4"/><path d="M402 330 C404 327 410 327 414 329 C418 331 420 331 424 329.6 C430 327.4 440 327 444 330 C446.6 334 446.6 346 445 352 C442 356 406 356 403 352.6 C400.6 346 400.4 336 402 330 Z" fill="#4a380a" opacity="0.6"/><path d="M403 342 C406 338 414 338 420 341 C428 338 440 338 444.600 342 C446 346 445.600 350 444 353.400 C436 355.400 410 355.400 403.600 353 C402 349 402 345 403 342 Z" fill="#2e2206" opacity="0.22"/><path d="M407.6 334.6 C406.6 329 409 323.4 413.6 320.4 C416.6 318.4 420 318.2 421.4 319.2 C421.8 321.6 421.2 324 420 325.4 C417 325.4 413.6 326.6 411.4 329 C409.8 330.8 408.6 332.8 407.6 334.6 Z" fill="#0e0a03"/><path d="M425.6 320.6 C426.6 318.2 429.6 317 431.8 318 C433.6 319.4 434 322 433.4 324.4 C432.8 326.4 431.6 327.8 429.8 328.2 C427.6 328 426.4 326.6 426 324.6 Z" fill="#4a3608"/><path d="M424.8 320.8 C425.6 318 428.6 316.6 431 317 C433 317.6 434.2 319.6 434.2 321.8 C432 320 428.6 319.6 424.8 320.8 Z" fill="#0e0a03"/><circle cx="431.2" cy="315.8" r="1.7" fill="#0e0a03"/></g><path d="M385.4 362v12.4M470.4 362v12.4" stroke="#8c8ab0" stroke-width="0.6" fill="none"/><path d="M346 162.8H382" stroke="#9a98c4" stroke-width="0.8" fill="none"/><path d="M346 182.4 C356 181.6 370 178 381.7 173.7 C392 169.6 404 164.6 413 163.3 C417 162.8 420 162.8 423 162.8 L574 162.8" stroke="#5c5c5c" stroke-width="2.0" fill="none" opacity="0.8"/><path d="M346 208.6 C360 208 372 207.6 382 207.5 C396 207.4 410 207.8 423 206.6 C430 206 438 206.4 445 208.6 C455 211.8 470 217.6 482 221.4 C490 223.6 496 224.4 502 224.2 C518 223.4 546 212 573.6 204.4" stroke="#5c5c5c" stroke-width="2.0" fill="none" opacity="0.8"/><path d="M346 261.8 C366 262.4 390 264.6 410 264.6 C430 264.6 446 262.4 462 262 C478 261.8 490 262.6 500 262.2 C514 261.4 530 257 541 254 C552 251.6 564 250.4 573.6 249.4" stroke="#5c5c5c" stroke-width="2.0" fill="none" opacity="0.8"/><path d="M346 311.2 H574" stroke="#5c5c5c" stroke-width="2.0" fill="none" opacity="0.8"/><path d="M346 361 H574" stroke="#5c5c5c" stroke-width="2.0" fill="none" opacity="0.8"/><path d="M346 162.8 C345.6 176 345.2 182 345.4 190 C345.8 230 346 300 346 361" stroke="#5c5c5c" stroke-width="2.0" fill="none" opacity="0.8"/><path d="M422.2 162.8 C423 190 423.6 220 423.4 250 C423.2 290 422.4 330 422 361" stroke="#5c5c5c" stroke-width="2.0" fill="none" opacity="0.8"/><path d="M498.4 162.8 C499 190 500.8 210 500.8 232 C500.6 270 499.4 330 498.6 361" stroke="#5c5c5c" stroke-width="2.0" fill="none" opacity="0.8"/><path d="M574 162.8 C573.4 190 573.2 215 573.4 247 C573.6 290 573.8 330 574 361" stroke="#5c5c5c" stroke-width="2.0" fill="none" opacity="0.8"/><path d="M346 182.4 C356 181.6 370 178 381.7 173.7 C392 169.6 404 164.6 413 163.3 C417 162.8 420 162.8 423 162.8 L574 162.8" stroke="#bababa" stroke-width="1.15" fill="none"/><path d="M346 208.6 C360 208 372 207.6 382 207.5 C396 207.4 410 207.8 423 206.6 C430 206 438 206.4 445 208.6 C455 211.8 470 217.6 482 221.4 C490 223.6 496 224.4 502 224.2 C518 223.4 546 212 573.6 204.4" stroke="#bababa" stroke-width="1.15" fill="none"/><path d="M346 261.8 C366 262.4 390 264.6 410 264.6 C430 264.6 446 262.4 462 262 C478 261.8 490 262.6 500 262.2 C514 261.4 530 257 541 254 C552 251.6 564 250.4 573.6 249.4" stroke="#bababa" stroke-width="1.15" fill="none"/><path d="M346 311.2 H574" stroke="#bababa" stroke-width="1.15" fill="none"/><path d="M346 361 H574" stroke="#bababa" stroke-width="1.15" fill="none"/><path d="M346 162.8 C345.6 176 345.2 182 345.4 190 C345.8 230 346 300 346 361" stroke="#bababa" stroke-width="1.15" fill="none"/><path d="M422.2 162.8 C423 190 423.6 220 423.4 250 C423.2 290 422.4 330 422 361" stroke="#bababa" stroke-width="1.15" fill="none"/><path d="M498.4 162.8 C499 190 500.8 210 500.8 232 C500.6 270 499.4 330 498.6 361" stroke="#bababa" stroke-width="1.15" fill="none"/><path d="M574 162.8 C573.4 190 573.2 215 573.4 247 C573.6 290 573.8 330 574 361" stroke="#bababa" stroke-width="1.15" fill="none"/><path d="M346 162.8V361H574V162.8" stroke="#a3a1cf" stroke-width="0.7" fill="none" opacity="0.85"/><rect x="344.1" y="160.9" width="3.8" height="3.8" fill="#aeacdc" stroke="#7a78a0" stroke-width="0.4"/><rect x="458.3" y="160.9" width="3.8" height="3.8" fill="#aeacdc" stroke="#7a78a0" stroke-width="0.4"/><rect x="572.1" y="160.9" width="3.8" height="3.8" fill="#aeacdc" stroke="#7a78a0" stroke-width="0.4"/><rect x="344.1" y="259.90000000000003" width="3.8" height="3.8" fill="#aeacdc" stroke="#7a78a0" stroke-width="0.4"/><rect x="572.1" y="259.90000000000003" width="3.8" height="3.8" fill="#aeacdc" stroke="#7a78a0" stroke-width="0.4"/><rect x="344.1" y="359.1" width="3.8" height="3.8" fill="#aeacdc" stroke="#7a78a0" stroke-width="0.4"/><rect x="458.3" y="359.1" width="3.8" height="3.8" fill="#aeacdc" stroke="#7a78a0" stroke-width="0.4"/><rect x="572.1" y="359.1" width="3.8" height="3.8" fill="#aeacdc" stroke="#7a78a0" stroke-width="0.4"/><circle cx="460.2" cy="261.6" r="2.1" fill="none" stroke="#e0e0e0" stroke-width="0.8"/><path d="M460.2 257.6v8M456.2 261.6h8" stroke="#e0e0e0" stroke-width="0.6"/><circle cx="460.2" cy="261.6" r="0.8" fill="#8a7a4a"/></svg>
<div style="left:168.8px;top:374px;width:586.2px;height:1px;background:#161616;opacity:0.69;"></div>
<svg style="left:0;top:0" width="1000" height="390" viewBox="0 0 1000 390"><rect x="172.6" y="378" width="4" height="3" fill="#c4c4c4"/><rect x="174.6" y="379.8" width="4" height="3" fill="#c4c4c4" stroke="#232323" stroke-width="0.5"/><rect x="184.4" y="377.6" width="6" height="4" fill="none" stroke="#c4c4c4" stroke-width="0.8"/><path d="M185.6 383.2h3.6M187.4 381.6v1.6" stroke="#c4c4c4" stroke-width="0.7"/><path d="M194.6 377.6h7.2v3.4c0 1-1 1-1.6 .4l-1-1h-2l-1 1c-.6.6-1.6.6-1.6-.4z" fill="#c4c4c4"/><circle cx="196.6" cy="379.2" r="0.8" fill="#232323"/><circle cx="199.8" cy="379.2" r="0.8" fill="#232323"/><path d="M199.6 383h1.8l-.9 1z" fill="#c4c4c4"/><rect x="204.8" y="375.8" width="34.8" height="8.8" fill="#191919" stroke="#303030" stroke-width="0.6"/><path d="M233.8 379.6l1.6 1.6 1.6-1.6" stroke="#a0a0a0" stroke-width="0.7" fill="none"/><rect x="242.4" y="377.2" width="6.6" height="4.6" fill="none" stroke="#c4c4c4" stroke-width="0.7"/><path d="M245.7 376.4v6M241.6 379.5h8" stroke="#c4c4c4" stroke-width="0.5"/><path d="M247.6 383h1.8l-.9 1z" fill="#c4c4c4"/><path d="M254.4 383l.8-4.4 5-1.4.6 5.8z" fill="none" stroke="#2d8ceb" stroke-width="0.7"/><path d="M253.4 383.4h8.6" stroke="#2d8ceb" stroke-width="0.6"/><rect x="264.4" y="375.8" width="34.4" height="8.8" fill="#191919" stroke="#303030" stroke-width="0.6"/><path d="M302 378.4h1.6l.6-.9h2.4l.6.9h1.6v4.6h-6.8z" fill="#c4c4c4"/><circle cx="305.4" cy="380.6" r="1.3" fill="#232323"/><path d="M314.4 381.6l3-3.2c1-1 2.4.2 1.4 1.2l-3 3.2c-1 1-2.4-.2-1.4-1.2z" fill="none" stroke="#4a4a4a" stroke-width="0.8"/><circle cx="327.6" cy="378.8" r="1.7" fill="#e03a3a"/><circle cx="326.4" cy="380.8" r="1.7" fill="#3ac040"/><circle cx="328.8" cy="380.8" r="1.7" fill="#3a6ae0"/><path d="M329.6 383h1.8l-.9 1z" fill="#c4c4c4"/><rect x="334.8" y="375.8" width="43.4" height="8.8" fill="#191919" stroke="#303030" stroke-width="0.6"/><path d="M372.4 379.6l1.6 1.6 1.6-1.6" stroke="#a0a0a0" stroke-width="0.7" fill="none"/><rect x="382" y="377.6" width="6" height="5" fill="none" stroke="#c4c4c4" stroke-width="0.7"/><rect x="383.4" y="378.8" width="3.2" height="2" fill="#c4c4c4"/><rect x="393.6" y="377.6" width="6.4" height="5" fill="none" stroke="#c4c4c4" stroke-width="0.7"/><path d="M394 378l5.6 4.2M399.6 378l-5.6 4.2" stroke="#c4c4c4" stroke-width="0.5"/><rect x="403" y="375.8" width="53" height="8.8" fill="#191919" stroke="#303030" stroke-width="0.6"/><path d="M450.4 379.6l1.6 1.6 1.6-1.6" stroke="#a0a0a0" stroke-width="0.7" fill="none"/><rect x="459.6" y="375.8" width="34.4" height="8.8" fill="#191919" stroke="#303030" stroke-width="0.6"/><path d="M488 379.6l1.6 1.6 1.6-1.6" stroke="#a0a0a0" stroke-width="0.7" fill="none"/><path d="M497.6 377.6h6.4M499 379.6h3.6v3.4h-3.6z" fill="none" stroke="#c4c4c4" stroke-width="0.8"/><rect x="509.4" y="376.8" width="6.4" height="6.6" fill="#161616" stroke="#c4c4c4" stroke-width="0.7"/><path d="M512.6 378.4v3.2M511 380h3.2" stroke="#c4c4c4" stroke-width="0.7"/><path d="M514.4 382.6h1v-1z" fill="#c4c4c4"/><path d="M521 378.4h6.4v4.4h-6.4zM524.2 377v4M523 379.6l1.2 1.4 1.2-1.4" fill="none" stroke="#c4c4c4" stroke-width="0.7"/><rect x="534" y="377" width="2.4" height="2.2" fill="#c4c4c4"/><rect x="531.4" y="381.2" width="2.4" height="2.2" fill="#c4c4c4"/><rect x="536.6" y="381.2" width="2.4" height="2.2" fill="#c4c4c4"/><path d="M535.2 379v1.2M532.6 381.2v-1h5.2v1" stroke="#c4c4c4" stroke-width="0.6" fill="none"/><circle cx="548" cy="380.2" r="2.6" fill="none" stroke="#c4c4c4" stroke-width="1.1"/><path d="M548 377.4v2l1.6 1.4M548 379.4l-1.6 1.4" stroke="#c4c4c4" stroke-width="0.5" fill="none"/></svg>
<div class="t" style="left:207.4px;top:374.9px;font-size:6.6px;color:#b0b0b0;transform:scaleX(0.8951) rotate(0.05deg);">(7.1%)</div>
<div class="t" style="left:268.2px;top:374.9px;font-size:6.6px;color:#8c8c8c;transform:scaleX(0.8655) rotate(0.05deg);">0:00:03:15</div>
<div class="t" style="left:339px;top:374.9px;font-size:6.6px;color:#b0b0b0;transform:scaleX(0.8760) rotate(0.05deg);">Quarter</div>
<div class="t" style="left:406.6px;top:374.9px;font-size:6.6px;color:#b0b0b0;transform:scaleX(0.8872) rotate(0.05deg);">Active Camera</div>
<div class="t" style="left:463px;top:374.9px;font-size:6.6px;color:#b0b0b0;transform:scaleX(0.8938) rotate(0.05deg);">1 View</div>
<div class="t" style="left:555px;top:374.9px;font-size:6.2px;color:#2d7fd8;transform:scaleX(0.8660) rotate(0.05deg);">+0.0</div>
<div style="left:756.8px;top:37.2px;width:133.2px;height:350.2px;background:#212121;"></div>
<div class="t" style="left:763.85px;top:39.9px;font-size:6.6px;color:#c4c4c4;transform:scaleX(0.8422) rotate(0.05deg);">RubberHose2</div>
<svg style="left:803.6px;top:42.6px;" width="5" height="5" viewBox="0 0 5 5"><path d="M0 .7h4.400M0 2.450h4.400M0 4.200h4.400" stroke="#a4a4a4" stroke-width="0.800"/></svg>
<div style="left:756.8px;top:52px;width:133.2px;height:1px;background:#1b1b1b;opacity:0.69;"></div>
<div style="left:759px;top:55.2px;width:103.6px;height:12.4px;background:#1c4a50;"></div>
<div style="left:759px;top:55.2px;width:1.6px;height:81px;background:#1a98a8;"></div>
<svg style="left:766.5px;top:59.5px;" width="5" height="4" viewBox="0 0 5 4"><rect x="0" y="0" width="0.9" height="0.9" fill="#1f7f8c"/><rect x="3.2" y="0" width="0.9" height="0.9" fill="#1f7f8c"/><rect x="0" y="2.7" width="0.9" height="0.9" fill="#1f7f8c"/><rect x="3.2" y="2.7" width="0.9" height="0.9" fill="#1f7f8c"/></svg>
<div class="t" style="left:773.7px;top:56.7px;font-size:6.5px;color:#1fb4cc;transform:scaleX(0.8462) rotate(0.05deg);">BUILD</div>
<svg style="left:794.1px;top:59.5px;" width="5" height="4" viewBox="0 0 5 4"><rect x="0" y="0" width="0.9" height="0.9" fill="#1f7f8c"/><rect x="3.2" y="0" width="0.9" height="0.9" fill="#1f7f8c"/><rect x="0" y="2.7" width="0.9" height="0.9" fill="#1f7f8c"/><rect x="3.2" y="2.7" width="0.9" height="0.9" fill="#1f7f8c"/></svg>
<div style="left:764.6px;top:70.4px;width:97.6px;height:8.8px;background:#161616;border-radius:1px;"></div>
<div class="t" style="left:767.8px;top:70.2px;font-size:6.6px;color:#c4c4c4;transform:scaleX(0.7609) rotate(0.05deg);">Hose Name...</div>
<div style="left:770.8px;top:84.6px;width:91.4px;height:30.6px;background:#1a1a1a;"></div>
<div style="left:771.2px;top:85px;width:85.2px;height:10.2px;background:#484848;"></div>
<div style="left:771.2px;top:96px;width:85.2px;height:1px;background:#2c2c2c;opacity:0.57;"></div>
<div style="left:771.2px;top:106px;width:85.2px;height:1px;background:#2c2c2c;opacity:0.57;"></div>
<div style="left:857px;top:85.6px;width:4.4px;height:23.6px;background:#3a3a3a;border-radius:2px;"></div>
<div class="t" style="left:774.6px;top:85.2px;font-size:6.6px;color:#a0a0a0;transform:scaleX(0.8758) rotate(0.05deg);">Shoulder/Wrist</div>
<div class="t" style="left:774.6px;top:96.2px;font-size:6.6px;color:#b0b0b0;transform:scaleX(0.8957) rotate(0.05deg);">Hip/Ankle</div>
<div class="t" style="left:774.6px;top:106.9px;font-size:6.6px;color:#b0b0b0;transform:scaleX(0.8587) rotate(0.05deg);">Shoulder/Hips</div>
<svg style="left:0;top:0" width="1000" height="200" viewBox="0 0 1000 200"><path d="M765.2 88.700l2.600-2.900 2.600 2.900z" fill="#19d3ee"/><path d="M765.2 94.600h5.200l-2.600 2.900z" fill="#19d3ee"/><path d="M765.100 104.400h5.400M767.800 101.700v5.400" stroke="#19d3ee" stroke-width="1.500"/><path d="M766 110.700l3.600 3.600M769.600 110.700l-3.600 3.600" stroke="#19d3ee" stroke-width="1.400"/><rect x="764.6" y="119.6" width="31.199999999999932" height="12.2" fill="#1e1e1e"/><rect x="798.4" y="119.6" width="30.399999999999977" height="12.2" fill="#1e1e1e"/><rect x="831.6" y="119.6" width="30.600000000000023" height="12.2" fill="#1e1e1e"/><path d="M769.400 123.700l13.200-2.800 8.200 8.600" stroke="#19d3ee" stroke-width="1.000" fill="none"/><circle cx="769.300" cy="123.700" r="1.300" fill="#1e1e1e" stroke="#19d3ee" stroke-width="0.800"/><circle cx="790.600" cy="129.500" r="1.300" fill="#1e1e1e" stroke="#19d3ee" stroke-width="0.800"/><path d="M777.600 127.400h4.600M779.900 125.100v4.600" stroke="#19d3ee" stroke-width="1.600"/><path d="M807.400 122.600c.8-2 3.600-2.800 5.600-1.600l3.600 3.400c.8 1 1 2 .6 3l-1.400 4.400-2.200.2-1-4.400-3.600-1.400c-1.400-.6-2.200-2.200-1.600-3.600z" fill="#19d3ee"/><circle cx="813.800" cy="126" r="1.000" fill="#1e1e1e"/><path d="M817.600 122.800l1.400 1.400-1 1.600zM810.600 127.200l-1.600 1.200 1.600 1.200z" fill="#19d3ee"/><path d="M835.800 125.200l4.600-2 15.800 7.200-.8 1.200c-6.600.2-14-1.800-19.600-4.600z" fill="#19d3ee"/><path d="M842.200 122.200l1.600-1.800M849.200 125l1.600-1.800M856 128l1.600-1.800" stroke="#19d3ee" stroke-width="1.000"/></svg>
<div style="left:759px;top:138.2px;width:103.6px;height:12.6px;background:#4a2321;"></div>
<div style="left:759px;top:138.2px;width:1.6px;height:12.6px;background:#c23a2c;"></div>
<svg style="left:766.5px;top:142.6px;" width="5" height="4" viewBox="0 0 5 4"><rect x="0" y="0" width="0.9" height="0.9" fill="#7a2c26"/><rect x="3.2" y="0" width="0.9" height="0.9" fill="#7a2c26"/><rect x="0" y="2.7" width="0.9" height="0.9" fill="#7a2c26"/><rect x="3.2" y="2.7" width="0.9" height="0.9" fill="#7a2c26"/></svg>
<div class="t" style="left:773.7px;top:139.8px;font-size:6.5px;color:#e23d30;transform:scaleX(0.7867) rotate(0.05deg);">STYLE</div>
<svg style="left:794.1px;top:142.6px;" width="5" height="4" viewBox="0 0 5 4"><rect x="0" y="0" width="0.9" height="0.9" fill="#7a2c26"/><rect x="3.2" y="0" width="0.9" height="0.9" fill="#7a2c26"/><rect x="0" y="2.7" width="0.9" height="0.9" fill="#7a2c26"/><rect x="3.2" y="2.7" width="0.9" height="0.9" fill="#7a2c26"/></svg>
<div style="left:759px;top:152.8px;width:103.6px;height:12.6px;background:#574213;"></div>
<div style="left:759px;top:152.8px;width:1.6px;height:12.6px;background:#d9a514;"></div>
<svg style="left:766.5px;top:157px;" width="5" height="4" viewBox="0 0 5 4"><rect x="0" y="0" width="0.9" height="0.9" fill="#866a18"/><rect x="3.2" y="0" width="0.9" height="0.9" fill="#866a18"/><rect x="0" y="2.7" width="0.9" height="0.9" fill="#866a18"/><rect x="3.2" y="2.7" width="0.9" height="0.9" fill="#866a18"/></svg>
<div class="t" style="left:773.7px;top:154.2px;font-size:6.5px;color:#f2bf1c;transform:scaleX(0.8555) rotate(0.05deg);">MANAGE</div>
<svg style="left:802.1px;top:157px;" width="5" height="4" viewBox="0 0 5 4"><rect x="0" y="0" width="0.9" height="0.9" fill="#866a18"/><rect x="3.2" y="0" width="0.9" height="0.9" fill="#866a18"/><rect x="0" y="2.7" width="0.9" height="0.9" fill="#866a18"/><rect x="3.2" y="2.7" width="0.9" height="0.9" fill="#866a18"/></svg>
<div style="left:892.2px;top:37.2px;width:107.8px;height:74px;background:#212121;"></div>
<div class="t" style="left:898.7px;top:39.9px;font-size:6.6px;color:#d8d8d8;transform:scaleX(0.8720) rotate(0.05deg);">Info</div>
<div style="left:898px;top:50px;width:21px;height:1px;background:#d0d0d0;opacity:0.92;"></div>
<svg style="left:914px;top:42.6px;" width="5" height="5" viewBox="0 0 5 5"><path d="M0 .7h4.400M0 2.450h4.400M0 4.200h4.400" stroke="#a4a4a4" stroke-width="0.800"/></svg>
<div class="t" style="left:930.8px;top:39.9px;font-size:6.6px;color:#9a9a9a;transform:scaleX(0.8649) rotate(0.05deg);">Audio</div>
<div style="left:896.4px;top:61px;width:10.4px;height:10px;background:#000;"></div>
<div class="t" style="left:909.8px;top:53px;font-size:6.2px;color:#8c8c8c;transform:scaleX(0.8850) rotate(0.05deg);">R :</div>
<div class="t" style="left:909.8px;top:60px;font-size:6.2px;color:#8c8c8c;transform:scaleX(0.8850) rotate(0.05deg);">G :</div>
<div class="t" style="left:909.8px;top:66.8px;font-size:6.2px;color:#8c8c8c;transform:scaleX(0.8850) rotate(0.05deg);">B :</div>
<div class="t" style="left:909.8px;top:73.6px;font-size:6.2px;color:#8c8c8c;transform:scaleX(0.8850) rotate(0.05deg);">A :</div>
<div class="t" style="left:919.8px;top:73.2px;font-size:6px;color:#9c9c9c;transform:scaleX(0.8850) rotate(0.05deg);">0</div>
<div style="left:945px;top:56px;width:1px;height:25.4px;background:#333;opacity:0.57;"></div>
<svg style="left:950.2px;top:66.4px;" width="5" height="5" viewBox="0 0 5 5"><path d="M0 2.4h4.8M2.4 0v4.8" stroke="#b0b0b0" stroke-width="0.6"/></svg>
<div class="t" style="left:957px;top:52.8px;font-size:6.3px;color:#9c9c9c;transform:scaleX(0.9035) rotate(0.05deg);">X : -2100</div>
<div class="t" style="left:957px;top:59.6px;font-size:6.3px;color:#9c9c9c;transform:scaleX(0.9201) rotate(0.05deg);">Y :&nbsp; 7909</div>
<div style="left:895.6px;top:85px;width:98.8px;height:1px;background:#333;opacity:0.57;"></div>
<div class="t" style="left:896.8px;top:86.4px;font-size:6.6px;color:#a4a4a4;transform:scaleX(0.8674) rotate(0.05deg);">bed net/ghost-bed-11-assets.ai</div>
<div class="t" style="left:896.8px;top:93.6px;font-size:6.6px;color:#a4a4a4;transform:scaleX(0.8661) rotate(0.05deg);">Duration: 0:00:16:00</div>
<div class="t" style="left:896.8px;top:100.8px;font-size:6.6px;color:#a4a4a4;transform:scaleX(0.8477) rotate(0.05deg);">In: 0:00:00:00, Out: 0:00:15:24</div>
<div style="left:892.2px;top:112.6px;width:107.8px;height:29.8px;background:#212121;"></div>
<div class="t" style="left:898.7px;top:116px;font-size:6.6px;color:#c8c8c8;transform:scaleX(0.9031) rotate(0.05deg);">Preview</div>
<svg style="left:925.2px;top:118.8px;" width="5" height="5" viewBox="0 0 5 5"><path d="M0 .7h4.400M0 2.450h4.400M0 4.200h4.400" stroke="#a4a4a4" stroke-width="0.800"/></svg>
<svg style="left:0;top:0" width="1000" height="200" viewBox="0 0 1000 200"><path d="M916.6 132.8v4.4" stroke="#c8c8c8" stroke-width="0.9"/><path d="M922.6 132.8v4.400l-4.600-2.200z" fill="#c8c8c8"/><path d="M933 132.8v4.400l-4.600-2.200z" fill="#c8c8c8"/><path d="M934.6 132.8v4.4" stroke="#c8c8c8" stroke-width="0.9"/><path d="M942 132.600l5 2.400-5 2.400z" fill="#c8c8c8"/><path d="M954.6 132.8v4.4" stroke="#c8c8c8" stroke-width="0.9"/><path d="M956.2 132.8l4.600 2.200-4.600 2.200z" fill="#c8c8c8"/><path d="M966.600 132.8l4.600 2.200-4.600 2.200z" fill="#c8c8c8"/><path d="M972.600 132.8v4.4" stroke="#c8c8c8" stroke-width="0.9"/></svg>
<div style="left:892.2px;top:143.8px;width:107.8px;height:243.6px;background:#212121;"></div>
<div class="t" style="left:898.7px;top:146.9px;font-size:6.6px;color:#d8d8d8;transform:scaleX(0.8614) rotate(0.05deg);">Effects &amp; Presets</div>
<div style="left:898px;top:157px;width:54.2px;height:1px;background:#d0d0d0;opacity:0.92;"></div>
<svg style="left:948.2px;top:149.8px;" width="5" height="5" viewBox="0 0 5 5"><path d="M0 .7h4.400M0 2.450h4.400M0 4.200h4.400" stroke="#a4a4a4" stroke-width="0.800"/></svg>
<div style="left:964.6px;top:146.9px;width:14.6px;height:10px;overflow:hidden;"><div class="t" style="left:0;top:0;font-size:6.6px;color:#9a9a9a;transform:scaleX(0.8700) rotate(0.05deg);">Librar</div></div>
<div style="left:979px;top:146.4px;width:1px;height:10.4px;background:#333;opacity:0.57;"></div>
<div class="t" style="left:991.7px;top:145.9px;font-size:10px;color:#d8d8d8;transform:scaleX(1.0067) rotate(0.05deg);font-weight:bold;">&#187;</div>
<div style="left:895.8px;top:161px;width:101px;height:9.4px;background:#161616;border-radius:1px;"></div>
<svg style="left:898.8px;top:162.2px;" width="9" height="7" viewBox="0 0 9 7"><circle cx="3.8" cy="2.8" r="1.9" fill="none" stroke="#c0c0c0" stroke-width="0.8"/><path d="M2.4 4.2l-2 2.2" stroke="#c0c0c0" stroke-width="0.9"/><path d="M6.4 4.400h2l-1 1.200z" fill="#c0c0c0"/></svg>
<div style="left:892.2px;top:171.6px;width:98px;height:204.4px;background:#242424;"></div>
<svg style="left:0;top:0" width="1000" height="390" viewBox="0 0 1000 390"><rect x="892.2" y="179.9" width="98" height="0.7" fill="#181818"/><path d="M896.000 174.8l1.700 1.800-1.700 1.800" stroke="#9a9a9a" stroke-width="0.700" fill="none"/><rect x="892.2" y="188.75" width="98" height="0.7" fill="#181818"/><path d="M896.000 183.65l1.700 1.800-1.700 1.800" stroke="#9a9a9a" stroke-width="0.700" fill="none"/><rect x="892.2" y="197.59" width="98" height="0.7" fill="#181818"/><path d="M896.000 192.49l1.700 1.800-1.700 1.800" stroke="#9a9a9a" stroke-width="0.700" fill="none"/><rect x="892.2" y="206.44" width="98" height="0.7" fill="#181818"/><path d="M896.000 201.34l1.700 1.800-1.700 1.800" stroke="#9a9a9a" stroke-width="0.700" fill="none"/><rect x="892.2" y="215.28" width="98" height="0.7" fill="#181818"/><path d="M896.000 210.18l1.700 1.800-1.700 1.800" stroke="#9a9a9a" stroke-width="0.700" fill="none"/><rect x="892.2" y="224.12" width="98" height="0.7" fill="#181818"/><path d="M896.000 219.03l1.700 1.800-1.700 1.800" stroke="#9a9a9a" stroke-width="0.700" fill="none"/><rect x="892.2" y="232.97" width="98" height="0.7" fill="#181818"/><path d="M896.000 227.87l1.700 1.800-1.700 1.800" stroke="#9a9a9a" stroke-width="0.700" fill="none"/><rect x="892.2" y="241.82" width="98" height="0.7" fill="#181818"/><path d="M896.000 236.72l1.700 1.800-1.700 1.800" stroke="#9a9a9a" stroke-width="0.700" fill="none"/><rect x="892.2" y="250.66" width="98" height="0.7" fill="#181818"/><path d="M896.000 245.56l1.700 1.800-1.700 1.800" stroke="#9a9a9a" stroke-width="0.700" fill="none"/><rect x="892.2" y="259.51" width="98" height="0.7" fill="#181818"/><path d="M896.000 254.41l1.700 1.800-1.700 1.800" stroke="#9a9a9a" stroke-width="0.700" fill="none"/><rect x="892.2" y="268.35" width="98" height="0.7" fill="#181818"/><path d="M896.000 263.25l1.700 1.800-1.700 1.800" stroke="#9a9a9a" stroke-width="0.700" fill="none"/><rect x="892.2" y="277.2" width="98" height="0.7" fill="#181818"/><path d="M896.000 272.1l1.700 1.800-1.700 1.800" stroke="#9a9a9a" stroke-width="0.700" fill="none"/><rect x="892.2" y="286.04" width="98" height="0.7" fill="#181818"/><path d="M896.000 280.94l1.700 1.800-1.700 1.800" stroke="#9a9a9a" stroke-width="0.700" fill="none"/><rect x="892.2" y="294.89" width="98" height="0.7" fill="#181818"/><path d="M896.000 289.79l1.700 1.800-1.700 1.800" stroke="#9a9a9a" stroke-width="0.700" fill="none"/><rect x="892.2" y="303.73" width="98" height="0.7" fill="#181818"/><path d="M896.000 298.63l1.700 1.800-1.700 1.800" stroke="#9a9a9a" stroke-width="0.700" fill="none"/><rect x="892.2" y="312.58" width="98" height="0.7" fill="#181818"/><path d="M896.000 307.48l1.700 1.800-1.700 1.800" stroke="#9a9a9a" stroke-width="0.700" fill="none"/><rect x="892.2" y="321.42" width="98" height="0.7" fill="#181818"/><path d="M896.000 316.32l1.700 1.800-1.700 1.800" stroke="#9a9a9a" stroke-width="0.700" fill="none"/><rect x="892.2" y="330.27" width="98" height="0.7" fill="#181818"/><path d="M896.000 325.17l1.700 1.800-1.700 1.800" stroke="#9a9a9a" stroke-width="0.700" fill="none"/><rect x="892.2" y="339.11" width="98" height="0.7" fill="#181818"/><path d="M896.000 334.01l1.700 1.800-1.700 1.800" stroke="#9a9a9a" stroke-width="0.700" fill="none"/><rect x="892.2" y="347.96" width="98" height="0.7" fill="#181818"/><path d="M896.000 342.86l1.700 1.800-1.700 1.800" stroke="#9a9a9a" stroke-width="0.700" fill="none"/><rect x="892.2" y="356.8" width="98" height="0.7" fill="#181818"/><path d="M896.000 351.7l1.700 1.800-1.700 1.800" stroke="#9a9a9a" stroke-width="0.700" fill="none"/><rect x="892.2" y="365.65" width="98" height="0.7" fill="#181818"/><path d="M896.000 360.55l1.700 1.800-1.700 1.800" stroke="#9a9a9a" stroke-width="0.700" fill="none"/><rect x="892.2" y="374.49" width="98" height="0.7" fill="#181818"/><path d="M896.000 369.39l1.700 1.800-1.700 1.800" stroke="#9a9a9a" stroke-width="0.700" fill="none"/></svg>
<div class="t" style="left:900.7px;top:171.5px;font-size:6.6px;color:#b4b4b4;transform:scaleX(0.8720) rotate(0.05deg);">* Animation Presets</div>
<div class="t" style="left:900.7px;top:180.34px;font-size:6.6px;color:#b4b4b4;transform:scaleX(0.8720) rotate(0.05deg);">3D Channel</div>
<div class="t" style="left:900.7px;top:189.19px;font-size:6.6px;color:#b4b4b4;transform:scaleX(0.8720) rotate(0.05deg);">Audio</div>
<div class="t" style="left:900.7px;top:198.03px;font-size:6.6px;color:#b4b4b4;transform:scaleX(0.8720) rotate(0.05deg);">Blur &amp; Sharpen</div>
<div class="t" style="left:900.7px;top:206.88px;font-size:6.6px;color:#b4b4b4;transform:scaleX(0.8720) rotate(0.05deg);">Boris FX Mocha</div>
<div class="t" style="left:900.7px;top:215.72px;font-size:6.6px;color:#b4b4b4;transform:scaleX(0.8720) rotate(0.05deg);">Channel</div>
<div class="t" style="left:900.7px;top:224.57px;font-size:6.6px;color:#b4b4b4;transform:scaleX(0.8720) rotate(0.05deg);">CINEMA 4D</div>
<div class="t" style="left:900.7px;top:233.42px;font-size:6.6px;color:#b4b4b4;transform:scaleX(0.8720) rotate(0.05deg);">Color Correction</div>
<div class="t" style="left:900.7px;top:242.26px;font-size:6.6px;color:#b4b4b4;transform:scaleX(0.8720) rotate(0.05deg);">Distort</div>
<div class="t" style="left:900.7px;top:251.11px;font-size:6.6px;color:#b4b4b4;transform:scaleX(0.8720) rotate(0.05deg);">Expression Controls</div>
<div class="t" style="left:900.7px;top:259.95px;font-size:6.6px;color:#b4b4b4;transform:scaleX(0.8720) rotate(0.05deg);">Generate</div>
<div class="t" style="left:900.7px;top:268.8px;font-size:6.6px;color:#b4b4b4;transform:scaleX(0.8720) rotate(0.05deg);">Immersive Video</div>
<div class="t" style="left:900.7px;top:277.64px;font-size:6.6px;color:#b4b4b4;transform:scaleX(0.8720) rotate(0.05deg);">Keying</div>
<div class="t" style="left:900.7px;top:286.49px;font-size:6.6px;color:#b4b4b4;transform:scaleX(0.8720) rotate(0.05deg);">Matte</div>
<div class="t" style="left:900.7px;top:295.33px;font-size:6.6px;color:#b4b4b4;transform:scaleX(0.8720) rotate(0.05deg);">Missing</div>
<div class="t" style="left:900.7px;top:304.18px;font-size:6.6px;color:#b4b4b4;transform:scaleX(0.8720) rotate(0.05deg);">Noise &amp; Grain</div>
<div class="t" style="left:900.7px;top:313.02px;font-size:6.6px;color:#b4b4b4;transform:scaleX(0.8720) rotate(0.05deg);">Obsolete</div>
<div class="t" style="left:900.7px;top:321.87px;font-size:6.6px;color:#b4b4b4;transform:scaleX(0.8720) rotate(0.05deg);">Perspective</div>
<div class="t" style="left:900.7px;top:330.71px;font-size:6.6px;color:#b4b4b4;transform:scaleX(0.8720) rotate(0.05deg);">Simulation</div>
<div class="t" style="left:900.7px;top:339.56px;font-size:6.6px;color:#b4b4b4;transform:scaleX(0.8720) rotate(0.05deg);">Stylize</div>
<div class="t" style="left:900.7px;top:348.4px;font-size:6.6px;color:#b4b4b4;transform:scaleX(0.8720) rotate(0.05deg);">Text</div>
<div class="t" style="left:900.7px;top:357.25px;font-size:6.6px;color:#b4b4b4;transform:scaleX(0.8720) rotate(0.05deg);">Time</div>
<div class="t" style="left:900.7px;top:366.09px;font-size:6.6px;color:#b4b4b4;transform:scaleX(0.8720) rotate(0.05deg);">Transition</div>
<div style="left:990.2px;top:171.6px;width:9.8px;height:204.4px;background:#252525;"></div>
<div style="left:991.2px;top:173px;width:6.6px;height:195.4px;background:#3a3a3a;border-radius:3.3px;"></div>
<div style="left:892.2px;top:376.4px;width:97.6px;height:10.6px;background:#1e1e1e;"></div>
<div style="left:892.2px;top:376px;width:107.8px;height:1px;background:#161616;opacity:0.69;"></div>
<svg style="left:980.6px;top:378.4px;" width="6" height="6" viewBox="0 0 6 6"><path d="M1.400 0h4.200v4.200h-1.400v1.400h-4.200v-4.200h1.400z" fill="#c8c8c8"/><path d="M1.400 1.400h2.800v2.800" stroke="#232323" stroke-width="0.5" fill="none"/></svg>
<div style="left:0px;top:388px;width:1000px;height:158px;background:#2a5f9c;"></div>
<div style="left:1px;top:389px;width:999px;height:155.8px;background:#212121;"></div>
<div class="t" style="left:6px;top:390.4px;font-size:6px;color:#8a8a8a;transform:scaleX(0.8850) rotate(0.05deg);">&#215;</div>
<div style="left:13.8px;top:392.2px;width:5.6px;height:5.6px;background:#b59e76;"></div>
<div class="t" style="left:25.6px;top:390.2px;font-size:6.6px;color:#d4d4d4;transform:scaleX(0.8655) rotate(0.05deg);">ghost-bed-11-assets</div>
<svg style="left:83.2px;top:393.4px;" width="5" height="5" viewBox="0 0 5 5"><path d="M0 .7h4.400M0 2.450h4.400M0 4.200h4.400" stroke="#a4a4a4" stroke-width="0.800"/></svg>
<div style="left:6px;top:400.2px;width:81.6px;height:1.7px;background:#8c8c8c;"></div>
<div class="t" style="left:107.5px;top:390.2px;font-size:6.6px;color:#8c8c8c;transform:scaleX(0.8315) rotate(0.05deg);">Render Queue</div>
<div class="t" style="left:8.75px;top:403.1px;font-size:9px;color:#2d8ceb;transform:scaleX(0.8744) rotate(0.05deg);font-weight:bold;">0:00:03:15</div>
<div class="t" style="left:6px;top:410.8px;font-size:6px;color:#1f5c9c;transform:scaleX(0.9142) rotate(0.05deg);">00090 (25.00 fps)</div>
<div style="left:56.8px;top:407.2px;width:167px;height:8.8px;background:#161616;border-radius:1px;"></div>
<svg style="left:59.6px;top:408.2px;" width="9" height="7" viewBox="0 0 9 7"><circle cx="3.8" cy="2.8" r="1.9" fill="none" stroke="#c0c0c0" stroke-width="0.8"/><path d="M2.400 4.200l-2 2.200" stroke="#c0c0c0" stroke-width="0.9"/><path d="M6.400 4.400h2l-1 1.200z" fill="#c0c0c0"/></svg>
<svg style="left:0;top:0" width="1000" height="546" viewBox="0 0 1000 546"><path d="M233.800 410h4.600M238.400 410v4.600M236.400 412.600h4v3.200h-4z" stroke="#c8c8c8" stroke-width="0.8" fill="none"/><path d="M234.400 408.800l1.200 1.200-1.200 1.200z" fill="#c8c8c8"/><path d="M252 408.200l.6 1.400 1.400.6-1.400.6-.6 1.400-.6-1.400-1.400-.6 1.400-.6z" fill="#c8c8c8"/><path d="M253.400 412l2.600-1.400 2.600 1.400v3l-2.600 1.400-2.600-1.400zM253.400 412l2.600 1.400 2.600-1.400M256 413.400v3" stroke="#c8c8c8" stroke-width="0.6" fill="none"/><path d="M268.200 413.800c0-3 1.800-5 4-5s4 2 4 5l-4-1.200z" fill="#2d8ceb"/><path d="M272.200 408.600v4.200" stroke="#232323" stroke-width="0.5"/><path d="M268.200 414.600h8" stroke="#2d8ceb" stroke-width="0.6"/><rect x="284.800" y="408.800" width="5" height="5" fill="#c8c8c8"/><rect x="283" y="410.600" width="5" height="5" fill="#c8c8c8" stroke="#232323" stroke-width="0.6"/><path d="M284.200 412.600h2.600M284.200 414h2.600" stroke="#232323" stroke-width="0.5"/><path d="M296.400 413.800l3.400-3.800c1.400-1.400 3.400.4 2 1.800l-3.400 3.800c-1.400 1.400-3.400-.4-2-1.800z" fill="none" stroke="#c8c8c8" stroke-width="1.0"/><path d="M298.400 414.800l3-3.400" stroke="#c8c8c8" stroke-width="0.5"/><rect x="313.600" y="409.400" width="7.400" height="5.800" rx="0.6" fill="none" stroke="#c8c8c8" stroke-width="0.8"/><path d="M315.400 411l3.600 2.800" stroke="#c8c8c8" stroke-width="0.6"/><path d="M315 408.400v1M319.600 408.400v1" stroke="#c8c8c8" stroke-width="0.7"/></svg>
<div style="left:1px;top:421.2px;width:329.6px;height:9.2px;background:#2a2a2a;"></div>
<div style="left:1px;top:421px;width:329.6px;height:1px;background:#1a1a1a;opacity:0.57;"></div>
<div style="left:1px;top:430px;width:329.6px;height:1px;background:#151515;opacity:0.69;"></div>
<svg style="left:0;top:0" width="1000" height="546" viewBox="0 0 1000 546"><path d="M3.3 425.8c1.700-2.700 4.500-2.700 6.200 0c-1.700 2.700-4.500 2.700-6.200 0z" fill="#b8b8b8" fill-opacity="0.35" stroke="#b8b8b8" stroke-width="0.7"/><circle cx="6.4" cy="425.8" r="1.15" fill="#1c1c1c"/><circle cx="6.4" cy="425.8" r="0.45" fill="#b8b8b8"/><path d="M12.200 424.8h1.400l1.800-1.600v5.200l-1.800-1.600h-1.400z" fill="#b8b8b8"/><path d="M16.400 424c1 1 1 2.600 0 3.600" stroke="#b8b8b8" stroke-width="0.6" fill="none"/><circle cx="22.300" cy="425.8" r="1.5" fill="#b8b8b8"/><rect x="27.800" y="425.2" width="4.200" height="3.200" fill="#b8b8b8"/><path d="M28.600 425.2v-1.200a1.300 1.300 0 0 1 2.600 0v1.200" stroke="#b8b8b8" stroke-width="0.7" fill="none"/><path d="M43.600 422.8h3l3.400 3.400-2.600 2.800-3.800-3.600z" fill="#b8b8b8"/><circle cx="44.900" cy="424.1" r="0.6" fill="#2a2a2a"/><path d="M192.2 426.8h5.200M193 426.6c0-4 3.600-4 3.600 0M193.2 428h3.200" stroke="#b8b8b8" stroke-width="0.7" fill="none"/><circle cx="194" cy="425.4" r="0.4" fill="#b8b8b8"/><circle cx="195.6" cy="425.4" r="0.4" fill="#b8b8b8"/><circle cx="202.600" cy="425.8" r="1.300" fill="none" stroke="#b8b8b8" stroke-width="0.7"/><path d="M202.600 423v1M202.600 427.6v1M199.800 425.8h1M204.400 425.8h1" stroke="#b8b8b8" stroke-width="0.7"/><path d="M208.400 423l4.600 5.600" stroke="#b8b8b8" stroke-width="0.7"/><rect x="223" y="423" width="6" height="5.600" fill="#b8b8b8"/><path d="M224.200 424.6h3.600v2.400h-3.600z" fill="#2a2a2a"/><path d="M231.400 426.8l3-3.200c1-1 2.600.2 1.600 1.400l-3 3.200c-1 1-2.600-.2-1.600-1.400z" fill="none" stroke="#b8b8b8" stroke-width="0.8"/><circle cx="241.800" cy="425.8" r="2.500" fill="none" stroke="#b8b8b8" stroke-width="0.7"/><path d="M241.800 423.3a2.500 2.500 0 0 1 0 5z" fill="#b8b8b8"/><path d="M249.600 423l2.400 1.400v2.800l-2.400 1.400-2.400-1.400v-2.800zM249.600 425.8v2.800M249.600 425.8l-2.400-1.400M249.600 425.8l2.400-1.400" stroke="#b8b8b8" stroke-width="0.6" fill="none"/></svg>
<div style="left:36px;top:422.2px;width:1px;height:7.2px;background:#151515;opacity:0.57;"></div>
<div style="left:69px;top:422.2px;width:1px;height:7.2px;background:#151515;opacity:0.57;"></div>
<div style="left:189px;top:422.2px;width:1px;height:7.2px;background:#151515;opacity:0.57;"></div>
<div style="left:260px;top:422.2px;width:1px;height:7.2px;background:#151515;opacity:0.57;"></div>
<div style="left:321px;top:422.2px;width:1px;height:7.2px;background:#151515;opacity:0.57;"></div>
<div class="t" style="left:57.2px;top:421px;font-size:5.4px;color:#9a9a9a;transform:scaleX(0.8850) rotate(0.05deg);font-style:italic;">#</div>
<div class="t" style="left:63.4px;top:421.6px;font-size:5.4px;color:#2d6fb0;transform:scaleX(0.8850) rotate(0.05deg);">.</div>
<div class="t" style="left:72.75px;top:421px;font-size:5.8px;color:#9a9a9a;transform:scaleX(0.7868) rotate(0.05deg);">Source Name</div>
<div class="t" style="left:215.4px;top:420.7px;font-size:7.8px;color:#b8b8b8;transform:scaleX(0.9500) rotate(0.05deg);letter-spacing:-0.4px;"><i>f</i>x</div>
<div class="t" style="left:263.5px;top:421px;font-size:5.8px;color:#9a9a9a;transform:scaleX(0.8128) rotate(0.05deg);">Parent &amp; Link</div>
<svg style="left:0;top:0" width="1000" height="546" viewBox="0 0 1000 546"><rect x="1" y="430.3" width="329.4" height="8.15" fill="#2d2d2d"/><rect x="2.6" y="430.8" width="7.2" height="7.25" fill="#222222"/><rect x="18.6" y="430.8" width="7.2" height="7.25" fill="#222222"/><rect x="26.6" y="430.8" width="7.2" height="7.25" fill="#222222"/><rect x="191.2" y="430.8" width="6.9" height="7.25" fill="#222222"/><rect x="199.0" y="430.8" width="6.9" height="7.25" fill="#222222"/><rect x="206.8" y="430.8" width="6.9" height="7.25" fill="#222222"/><rect x="214.6" y="430.8" width="6.9" height="7.25" fill="#222222"/><rect x="222.4" y="430.8" width="6.9" height="7.25" fill="#222222"/><rect x="230.2" y="430.8" width="6.9" height="7.25" fill="#222222"/><rect x="238.0" y="430.8" width="6.9" height="7.25" fill="#222222"/><rect x="245.8" y="430.8" width="6.9" height="7.25" fill="#222222"/><rect x="273.2" y="430.7" width="45.4" height="7.45" fill="#1b1b1b"/></svg>
<div style="left:45.2px;top:431.3px;width:6.6px;height:6.4px;background:#aeabdc;"></div>
<div class="t" style="left:56.2px;top:429.23px;font-size:6.8px;color:#b8b8b8;transform:scaleX(0.8724) rotate(0.05deg);">5</div>
<div class="t" style="left:81.8px;top:429.23px;font-size:6.9px;color:#c8c8c8;transform:scaleX(0.8819) rotate(0.05deg);">ring finger/ghost-bed-11-assets.ai</div>
<div class="t" style="left:215.4px;top:429.03px;font-size:7.8px;color:#c4c4c4;transform:scaleX(0.9500) rotate(0.05deg);letter-spacing:-0.4px;"><i>f</i>x</div>
<div class="t" style="left:276.8px;top:429.23px;font-size:6.6px;color:#c0c0c0;transform:scaleX(0.8366) rotate(0.05deg);">None</div>
<svg style="left:0;top:0" width="1000" height="546" viewBox="0 0 1000 546"><rect x="1" y="439.15" width="329.4" height="8.15" fill="#2d2d2d"/><rect x="2.6" y="439.65" width="7.2" height="7.25" fill="#222222"/><rect x="18.6" y="439.65" width="7.2" height="7.25" fill="#222222"/><rect x="26.6" y="439.65" width="7.2" height="7.25" fill="#222222"/><rect x="191.2" y="439.65" width="6.9" height="7.25" fill="#222222"/><rect x="199.0" y="439.65" width="6.9" height="7.25" fill="#222222"/><rect x="206.8" y="439.65" width="6.9" height="7.25" fill="#222222"/><rect x="214.6" y="439.65" width="6.9" height="7.25" fill="#222222"/><rect x="222.4" y="439.65" width="6.9" height="7.25" fill="#222222"/><rect x="230.2" y="439.65" width="6.9" height="7.25" fill="#222222"/><rect x="238.0" y="439.65" width="6.9" height="7.25" fill="#222222"/><rect x="245.8" y="439.65" width="6.9" height="7.25" fill="#222222"/><rect x="273.2" y="439.55" width="45.4" height="7.45" fill="#1b1b1b"/></svg>
<div style="left:45.2px;top:440.15px;width:6.6px;height:6.4px;background:#aeabdc;"></div>
<div class="t" style="left:56.2px;top:438.08px;font-size:6.8px;color:#b8b8b8;transform:scaleX(0.8724) rotate(0.05deg);">6</div>
<div class="t" style="left:81.8px;top:438.08px;font-size:6.9px;color:#c8c8c8;transform:scaleX(0.8524) rotate(0.05deg);">middle finger/ghost-bed-11-assets.ai</div>
<div class="t" style="left:215.4px;top:437.88px;font-size:7.8px;color:#c4c4c4;transform:scaleX(0.9500) rotate(0.05deg);letter-spacing:-0.4px;"><i>f</i>x</div>
<div class="t" style="left:276.8px;top:438.08px;font-size:6.6px;color:#c0c0c0;transform:scaleX(0.8366) rotate(0.05deg);">None</div>
<svg style="left:0;top:0" width="1000" height="546" viewBox="0 0 1000 546"><rect x="1" y="448.01" width="329.4" height="8.15" fill="#2d2d2d"/><rect x="2.6" y="448.51" width="7.2" height="7.25" fill="#222222"/><rect x="18.6" y="448.51" width="7.2" height="7.25" fill="#222222"/><rect x="26.6" y="448.51" width="7.2" height="7.25" fill="#222222"/><rect x="191.2" y="448.51" width="6.9" height="7.25" fill="#222222"/><rect x="199.0" y="448.51" width="6.9" height="7.25" fill="#222222"/><rect x="206.8" y="448.51" width="6.9" height="7.25" fill="#222222"/><rect x="214.6" y="448.51" width="6.9" height="7.25" fill="#222222"/><rect x="222.4" y="448.51" width="6.9" height="7.25" fill="#222222"/><rect x="230.2" y="448.51" width="6.9" height="7.25" fill="#222222"/><rect x="238.0" y="448.51" width="6.9" height="7.25" fill="#222222"/><rect x="245.8" y="448.51" width="6.9" height="7.25" fill="#222222"/><rect x="273.2" y="448.41" width="45.4" height="7.45" fill="#1b1b1b"/></svg>
<div style="left:45.2px;top:449.01px;width:6.6px;height:6.4px;background:#aeabdc;"></div>
<div class="t" style="left:56.2px;top:446.94px;font-size:6.8px;color:#b8b8b8;transform:scaleX(0.8724) rotate(0.05deg);">7</div>
<div class="t" style="left:81.8px;top:446.94px;font-size:6.9px;color:#c8c8c8;transform:scaleX(0.9005) rotate(0.05deg);">pointing finger/ghost-bed-11-assets.ai</div>
<div class="t" style="left:215.4px;top:446.74px;font-size:7.8px;color:#c4c4c4;transform:scaleX(0.9500) rotate(0.05deg);letter-spacing:-0.4px;"><i>f</i>x</div>
<div class="t" style="left:276.8px;top:446.94px;font-size:6.6px;color:#c0c0c0;transform:scaleX(0.8366) rotate(0.05deg);">None</div>
<svg style="left:0;top:0" width="1000" height="546" viewBox="0 0 1000 546"><rect x="1" y="456.86" width="329.4" height="8.15" fill="#454545"/><rect x="2.6" y="457.36" width="7.2" height="7.25" fill="#343434"/><rect x="18.6" y="457.36" width="7.2" height="7.25" fill="#343434"/><rect x="26.6" y="457.36" width="7.2" height="7.25" fill="#343434"/><rect x="191.2" y="457.36" width="6.9" height="7.25" fill="#343434"/><rect x="199.0" y="457.36" width="6.9" height="7.25" fill="#343434"/><rect x="206.8" y="457.36" width="6.9" height="7.25" fill="#343434"/><rect x="214.6" y="457.36" width="6.9" height="7.25" fill="#343434"/><rect x="222.4" y="457.36" width="6.9" height="7.25" fill="#343434"/><rect x="230.2" y="457.36" width="6.9" height="7.25" fill="#343434"/><rect x="238.0" y="457.36" width="6.9" height="7.25" fill="#343434"/><rect x="245.8" y="457.36" width="6.9" height="7.25" fill="#343434"/><rect x="273.2" y="457.26" width="45.4" height="7.45" fill="#1b1b1b"/></svg>
<div style="left:45.2px;top:457.86px;width:6.6px;height:6.4px;background:#aeabdc;"></div>
<div class="t" style="left:56.2px;top:455.79px;font-size:6.8px;color:#b8b8b8;transform:scaleX(0.8724) rotate(0.05deg);">8</div>
<svg style="left:79px;top:456.46px;" width="111" height="9.6" viewBox="0 0 111 9.6"><rect x="0.9" y="0.75" width="108.6" height="7.75" fill="#262626" stroke="#c0c0c0" stroke-width="0.6"/></svg>
<div class="t" style="left:81.8px;top:455.79px;font-size:6.9px;color:#dcdcdc;transform:scaleX(0.8889) rotate(0.05deg);">bed net/ghost-bed-11-assets.ai</div>
<div class="t" style="left:215.4px;top:455.59px;font-size:7.8px;color:#c4c4c4;transform:scaleX(0.9500) rotate(0.05deg);letter-spacing:-0.4px;"><i>f</i>x</div>
<div class="t" style="left:276.8px;top:455.79px;font-size:6.6px;color:#c0c0c0;transform:scaleX(0.8366) rotate(0.05deg);">None</div>
<svg style="left:0;top:0" width="1000" height="546" viewBox="0 0 1000 546"><rect x="1" y="465.6" width="329.4" height="70.6" fill="#242424"/><rect x="1" y="473.88" width="329.4" height="0.8" fill="#202020"/><rect x="1" y="482.78" width="329.4" height="0.8" fill="#202020"/><rect x="1" y="491.58" width="329.4" height="0.8" fill="#202020"/><rect x="1" y="500.48" width="329.4" height="0.8" fill="#202020"/><rect x="1" y="509.28" width="329.4" height="0.8" fill="#202020"/><rect x="1" y="518.18" width="329.4" height="0.8" fill="#202020"/><rect x="1" y="526.98" width="329.4" height="0.8" fill="#202020"/><rect x="1" y="535.88" width="329.4" height="0.8" fill="#202020"/></svg>
<div class="t" style="left:56.8px;top:465.2px;font-size:6.6px;color:#b4b4b4;transform:scaleX(0.8178) rotate(0.05deg);">Effects</div>
<div style="left:63.6px;top:474.8px;width:125.6px;height:8.2px;background:#474747;"></div>
<div class="t" style="left:65.8px;top:474.1px;font-size:6.6px;color:#a8a8a8;transform:scaleX(0.8628) rotate(0.05deg);">Mesh Warp</div>
<div class="t" style="left:3.4px;top:473.7px;font-size:7.8px;color:#b8b8b8;transform:scaleX(0.9500) rotate(0.05deg);letter-spacing:-0.4px;"><i>f</i>x</div>
<div class="t" style="left:74.6px;top:482.9px;font-size:6.6px;color:#b4b4b4;transform:scaleX(0.8240) rotate(0.05deg);">Rows</div>
<div class="t" style="left:74.6px;top:491.8px;font-size:6.6px;color:#b4b4b4;transform:scaleX(0.8409) rotate(0.05deg);">Columns</div>
<div class="t" style="left:82.7px;top:500.6px;font-size:6.6px;color:#b4b4b4;transform:scaleX(0.9055) rotate(0.05deg);">Quality</div>
<div class="t" style="left:92.7px;top:509.5px;font-size:6.6px;color:#b4b4b4;transform:scaleX(0.9008) rotate(0.05deg);">Distortion Mesh</div>
<div class="t" style="left:74.6px;top:518.3px;font-size:6.6px;color:#b4b4b4;transform:scaleX(0.8684) rotate(0.05deg);">Compositing Options</div>
<div class="t" style="left:56.8px;top:527.2px;font-size:6.6px;color:#b4b4b4;transform:scaleX(0.8684) rotate(0.05deg);">Transform</div>
<div class="t" style="left:192px;top:473.9px;font-size:6.8px;color:#2d8ceb;transform:scaleX(0.8275) rotate(0.05deg);">Reset</div>
<div style="left:252.6px;top:481px;width:4.6px;height:1px;background:#2d6fb0;opacity:0.69;"></div>
<div class="t" style="left:192px;top:482.7px;font-size:6.8px;color:#2d8ceb;transform:scaleX(0.8724) rotate(0.05deg);">4</div>
<div class="t" style="left:192px;top:491.6px;font-size:6.8px;color:#2d8ceb;transform:scaleX(0.8724) rotate(0.05deg);">3</div>
<div class="t" style="left:192px;top:500.4px;font-size:6.8px;color:#2d8ceb;transform:scaleX(0.8724) rotate(0.05deg);">8</div>
<div class="t" style="left:192px;top:527px;font-size:6.8px;color:#2d8ceb;transform:scaleX(0.8275) rotate(0.05deg);">Reset</div>
<div style="left:1px;top:536px;width:998.2px;height:1px;background:#151515;opacity:0.69;"></div>
<div style="left:190.6px;top:537.2px;width:69px;height:7.4px;background:#2a2a2a;"></div>
<div class="t" style="left:193.25px;top:536.1px;font-size:6.6px;color:#a0a0a0;transform:scaleX(0.8732) rotate(0.05deg);">Toggle Switches / Modes</div>
<svg style="left:0;top:0" width="1000" height="546" viewBox="0 0 1000 546"><path d="M3.3 434.13c1.700-2.700 4.500-2.700 6.200 0c-1.700 2.700-4.500 2.700-6.200 0z" fill="#d8d8d8" fill-opacity="0.35" stroke="#d8d8d8" stroke-width="0.7"/><circle cx="6.4" cy="434.13" r="1.15" fill="#1c1c1c"/><circle cx="6.4" cy="434.13" r="0.45" fill="#d8d8d8"/><path d="M39.400 432.33l1.800 1.800-1.800 1.800" stroke="#a0a0a0" stroke-width="0.7" fill="none"/><rect x="72.300" y="430.8" width="5.600" height="7.000" rx="0.6" fill="#2a1803" stroke="#b86a12" stroke-width="0.6"/><path d="M73.900 431.9l3 1.500-3 1.500z" fill="#f0921c"/><path d="M74 435.5v1.400h1.600" stroke="#d8c8a8" stroke-width="0.5" fill="none"/><path d="M192.2 435.13h5.200M193 434.93c0-4 3.600-4 3.600 0M193.2 436.33h3.200" stroke="#b0b0b0" stroke-width="0.7" fill="none"/><circle cx="194" cy="433.73" r="0.4" fill="#b0b0b0"/><circle cx="195.6" cy="433.73" r="0.4" fill="#b0b0b0"/><path d="M208.200 436.73l4.800-5.400" stroke="#c4c4c4" stroke-width="0.7"/><circle cx="266" cy="434.13" r="2.300" fill="none" stroke="#b0b0b0" stroke-width="0.6"/><path d="M266 434.13m-1 0a1 1 0 1 1 1 1c1.200 0 2.200-.6 2.600-1.600" fill="none" stroke="#b0b0b0" stroke-width="0.6"/><path d="M313 433.33l1.700 1.700 1.700-1.700" stroke="#a8a8a8" stroke-width="0.7" fill="none"/><path d="M3.3 442.98c1.700-2.700 4.500-2.700 6.200 0c-1.700 2.700-4.500 2.700-6.200 0z" fill="#d8d8d8" fill-opacity="0.35" stroke="#d8d8d8" stroke-width="0.7"/><circle cx="6.4" cy="442.98" r="1.15" fill="#1c1c1c"/><circle cx="6.4" cy="442.98" r="0.45" fill="#d8d8d8"/><path d="M39.400 441.18l1.800 1.800-1.800 1.800" stroke="#a0a0a0" stroke-width="0.7" fill="none"/><rect x="72.300" y="439.65" width="5.600" height="7.000" rx="0.6" fill="#2a1803" stroke="#b86a12" stroke-width="0.6"/><path d="M73.900 440.75l3 1.500-3 1.500z" fill="#f0921c"/><path d="M74 444.35v1.400h1.600" stroke="#d8c8a8" stroke-width="0.5" fill="none"/><path d="M192.2 443.98h5.200M193 443.78c0-4 3.600-4 3.600 0M193.2 445.18h3.200" stroke="#b0b0b0" stroke-width="0.7" fill="none"/><circle cx="194" cy="442.58" r="0.4" fill="#b0b0b0"/><circle cx="195.6" cy="442.58" r="0.4" fill="#b0b0b0"/><path d="M208.200 445.58l4.800-5.400" stroke="#c4c4c4" stroke-width="0.7"/><circle cx="266" cy="442.98" r="2.300" fill="none" stroke="#b0b0b0" stroke-width="0.6"/><path d="M266 442.98m-1 0a1 1 0 1 1 1 1c1.200 0 2.200-.6 2.600-1.600" fill="none" stroke="#b0b0b0" stroke-width="0.6"/><path d="M313 442.18l1.700 1.700 1.700-1.700" stroke="#a8a8a8" stroke-width="0.7" fill="none"/><path d="M3.3 451.84c1.700-2.700 4.500-2.700 6.200 0c-1.700 2.700-4.500 2.700-6.200 0z" fill="#d8d8d8" fill-opacity="0.35" stroke="#d8d8d8" stroke-width="0.7"/><circle cx="6.4" cy="451.84" r="1.15" fill="#1c1c1c"/><circle cx="6.4" cy="451.84" r="0.45" fill="#d8d8d8"/><path d="M39.400 450.04l1.800 1.800-1.800 1.800" stroke="#a0a0a0" stroke-width="0.7" fill="none"/><rect x="72.300" y="448.51" width="5.600" height="7.000" rx="0.6" fill="#2a1803" stroke="#b86a12" stroke-width="0.6"/><path d="M73.900 449.61l3 1.500-3 1.500z" fill="#f0921c"/><path d="M74 453.21v1.400h1.600" stroke="#d8c8a8" stroke-width="0.5" fill="none"/><path d="M192.2 452.84h5.200M193 452.64c0-4 3.600-4 3.600 0M193.2 454.04h3.200" stroke="#b0b0b0" stroke-width="0.7" fill="none"/><circle cx="194" cy="451.44" r="0.4" fill="#b0b0b0"/><circle cx="195.6" cy="451.44" r="0.4" fill="#b0b0b0"/><path d="M208.200 454.44l4.800-5.400" stroke="#c4c4c4" stroke-width="0.7"/><circle cx="266" cy="451.84" r="2.300" fill="none" stroke="#b0b0b0" stroke-width="0.6"/><path d="M266 451.84m-1 0a1 1 0 1 1 1 1c1.200 0 2.200-.6 2.600-1.600" fill="none" stroke="#b0b0b0" stroke-width="0.6"/><path d="M313 451.04l1.700 1.700 1.700-1.700" stroke="#a8a8a8" stroke-width="0.7" fill="none"/><path d="M3.3 460.69c1.700-2.700 4.500-2.700 6.200 0c-1.700 2.700-4.500 2.700-6.200 0z" fill="#d8d8d8" fill-opacity="0.35" stroke="#d8d8d8" stroke-width="0.7"/><circle cx="6.4" cy="460.69" r="1.15" fill="#1c1c1c"/><circle cx="6.4" cy="460.69" r="0.45" fill="#d8d8d8"/><path d="M39 459.69l1.800 1.800 1.800-1.800" stroke="#a0a0a0" stroke-width="0.7" fill="none"/><rect x="72.300" y="457.36" width="5.600" height="7.000" rx="0.6" fill="#2a1803" stroke="#b86a12" stroke-width="0.6"/><path d="M73.900 458.46l3 1.500-3 1.500z" fill="#f0921c"/><path d="M74 462.06v1.400h1.600" stroke="#d8c8a8" stroke-width="0.5" fill="none"/><path d="M192.2 461.69h5.200M193 461.49c0-4 3.600-4 3.600 0M193.2 462.89h3.200" stroke="#b0b0b0" stroke-width="0.7" fill="none"/><circle cx="194" cy="460.29" r="0.4" fill="#b0b0b0"/><circle cx="195.6" cy="460.29" r="0.4" fill="#b0b0b0"/><path d="M208.200 463.29l4.800-5.400" stroke="#c4c4c4" stroke-width="0.7"/><circle cx="266" cy="460.69" r="2.300" fill="none" stroke="#b0b0b0" stroke-width="0.6"/><path d="M266 460.69m-1 0a1 1 0 1 1 1 1c1.200 0 2.200-.6 2.600-1.600" fill="none" stroke="#b0b0b0" stroke-width="0.6"/><path d="M313 459.89l1.700 1.700 1.700-1.700" stroke="#a8a8a8" stroke-width="0.7" fill="none"/><path d="M48.2 469.1l1.800 1.800 1.800-1.800" stroke="#a0a0a0" stroke-width="0.7" fill="none"/><path d="M57.2 478l1.800 1.800 1.800-1.800" stroke="#a0a0a0" stroke-width="0.7" fill="none"/><circle cx="75.8" cy="505.6" r="2.800" fill="none" stroke="#c8c8c8" stroke-width="0.8"/><path d="M74.8 502h2.000M75.8 505.6v-1.900" stroke="#c8c8c8" stroke-width="0.8"/><circle cx="75.8" cy="514.5" r="2.800" fill="none" stroke="#2d8ceb" stroke-width="0.8"/><path d="M74.8 510.9h2.000M75.8 514.5v-1.900" stroke="#2d8ceb" stroke-width="0.8"/><path d="M82.400 511.400v5.400h4.800M83.400 515.400l1.400-2 1 1 1.200-1.600" stroke="#b8b8b8" stroke-width="0.6" fill="none"/><path d="M8.400 511.200v5l-3.800-2.500z" fill="#c8c8c8"/><path d="M20.800 511.200v5l3.800-2.500z" fill="#c8c8c8"/><path d="M14.200 511.300l2.400 2.400-2.400 2.400-2.400-2.400z" fill="none" stroke="#b0b0b0" stroke-width="0.600"/><circle cx="14.200" cy="513.700" r="0.700" fill="#b0b0b0"/><path d="M66.1 521.3l1.800 1.800-1.800 1.800" stroke="#a0a0a0" stroke-width="0.7" fill="none"/><path d="M48.5 530.2l1.800 1.800-1.800 1.800" stroke="#a0a0a0" stroke-width="0.7" fill="none"/><path d="M192.600 523h4.600M194.900 520.700v4.600M199.400 523h4.600" stroke="#e0e0e0" stroke-width="0.9"/><circle cx="273" cy="487.7" r="2.300" fill="none" stroke="#b0b0b0" stroke-width="0.6"/><path d="M273 487.7m-1 0a1 1 0 1 1 1 1c1.200 0 2.200-.6 2.600-1.600" fill="none" stroke="#b0b0b0" stroke-width="0.6"/><circle cx="273" cy="496.6" r="2.300" fill="none" stroke="#b0b0b0" stroke-width="0.6"/><path d="M273 496.6m-1 0a1 1 0 1 1 1 1c1.200 0 2.200-.6 2.600-1.600" fill="none" stroke="#b0b0b0" stroke-width="0.6"/><circle cx="273" cy="505.4" r="2.300" fill="none" stroke="#b0b0b0" stroke-width="0.6"/><path d="M273 505.4m-1 0a1 1 0 1 1 1 1c1.200 0 2.200-.6 2.600-1.600" fill="none" stroke="#b0b0b0" stroke-width="0.6"/><circle cx="273" cy="514.3" r="2.300" fill="none" stroke="#b0b0b0" stroke-width="0.6"/><path d="M273 514.3m-1 0a1 1 0 1 1 1 1c1.200 0 2.200-.6 2.600-1.600" fill="none" stroke="#b0b0b0" stroke-width="0.6"/><rect x="3.400" y="538.200" width="4.400" height="3.600" fill="#2d8ceb"/><rect x="5.600" y="540" width="4.400" height="3.600" fill="#2d8ceb" stroke="#232323" stroke-width="0.5"/><circle cx="15.400" cy="540.200" r="2" fill="none" stroke="#c0c0c0" stroke-width="0.7"/><circle cx="17.400" cy="541.800" r="2" fill="none" stroke="#c0c0c0" stroke-width="0.7"/><path d="M24 539v4.400M27.600 539v4.400M22.800 541.200h6" stroke="#c0c0c0" stroke-width="0.7" fill="none"/><path d="M24.800 538.200h2v6h-2z" fill="none" stroke="#c0c0c0" stroke-width="0.5"/><path d="M332.400 541.600h5.600M335.600 539.600l2.400 2" stroke="#c0c0c0" stroke-width="0.7" fill="none"/></svg>
<div style="left:330.4px;top:403px;width:1px;height:133.2px;background:#151515;"></div>
<div style="left:331.4px;top:403px;width:2.6px;height:18px;background:#1d1d1d;"></div>
<div style="left:331.4px;top:430.4px;width:2.6px;height:35px;background:#2c2c2c;"></div>
<div style="left:334px;top:406.2px;width:652.6px;height:3.8px;background:#6c6c6c;border-radius:0 1px 1px 0;"></div>
<div style="left:334px;top:418px;width:1px;height:2.4px;background:#8a8a8a;opacity:0.57;"></div>
<div class="t" style="left:329.9px;top:409.2px;font-size:6.2px;color:#a8a8a8;transform:scaleX(0.9386) rotate(0.05deg);">:00s</div>
<div style="left:374px;top:418px;width:1px;height:2.4px;background:#8a8a8a;opacity:0.57;"></div>
<div class="t" style="left:369.99px;top:409.2px;font-size:6px;color:#a8a8a8;transform:scaleX(0.8683) rotate(0.05deg);">01s</div>
<div style="left:415px;top:418px;width:1px;height:2.4px;background:#8a8a8a;opacity:0.57;"></div>
<div class="t" style="left:410.78px;top:409.2px;font-size:6px;color:#a8a8a8;transform:scaleX(0.8683) rotate(0.05deg);">02s</div>
<div style="left:456px;top:418px;width:1px;height:2.4px;background:#8a8a8a;opacity:0.57;"></div>
<div class="t" style="left:451.57px;top:409.2px;font-size:6px;color:#a8a8a8;transform:scaleX(0.8683) rotate(0.05deg);">03s</div>
<div style="left:497px;top:418px;width:1px;height:2.4px;background:#8a8a8a;opacity:0.57;"></div>
<div class="t" style="left:492.36px;top:409.2px;font-size:6px;color:#a8a8a8;transform:scaleX(0.8683) rotate(0.05deg);">04s</div>
<div style="left:537px;top:418px;width:1px;height:2.4px;background:#8a8a8a;opacity:0.57;"></div>
<div class="t" style="left:533.15px;top:409.2px;font-size:6px;color:#a8a8a8;transform:scaleX(0.8683) rotate(0.05deg);">05s</div>
<div style="left:578px;top:418px;width:1px;height:2.4px;background:#8a8a8a;opacity:0.57;"></div>
<div class="t" style="left:573.94px;top:409.2px;font-size:6px;color:#a8a8a8;transform:scaleX(0.8683) rotate(0.05deg);">06s</div>
<div style="left:619px;top:418px;width:1px;height:2.4px;background:#8a8a8a;opacity:0.57;"></div>
<div class="t" style="left:614.73px;top:409.2px;font-size:6px;color:#a8a8a8;transform:scaleX(0.8683) rotate(0.05deg);">07s</div>
<div style="left:660px;top:418px;width:1px;height:2.4px;background:#8a8a8a;opacity:0.57;"></div>
<div class="t" style="left:655.52px;top:409.2px;font-size:6px;color:#a8a8a8;transform:scaleX(0.8683) rotate(0.05deg);">08s</div>
<div style="left:701px;top:418px;width:1px;height:2.4px;background:#8a8a8a;opacity:0.57;"></div>
<div class="t" style="left:696.31px;top:409.2px;font-size:6px;color:#a8a8a8;transform:scaleX(0.8683) rotate(0.05deg);">09s</div>
<div style="left:741px;top:418px;width:1px;height:2.4px;background:#8a8a8a;opacity:0.57;"></div>
<div class="t" style="left:737.1px;top:409.2px;font-size:6px;color:#a8a8a8;transform:scaleX(0.8683) rotate(0.05deg);">10s</div>
<div style="left:782px;top:418px;width:1px;height:2.4px;background:#8a8a8a;opacity:0.57;"></div>
<div class="t" style="left:777.89px;top:409.2px;font-size:6px;color:#a8a8a8;transform:scaleX(0.9102) rotate(0.05deg);">11s</div>
<div style="left:823px;top:418px;width:1px;height:2.4px;background:#8a8a8a;opacity:0.57;"></div>
<div class="t" style="left:818.68px;top:409.2px;font-size:6px;color:#a8a8a8;transform:scaleX(0.8683) rotate(0.05deg);">12s</div>
<div style="left:864px;top:418px;width:1px;height:2.4px;background:#8a8a8a;opacity:0.57;"></div>
<div class="t" style="left:859.47px;top:409.2px;font-size:6px;color:#a8a8a8;transform:scaleX(0.8683) rotate(0.05deg);">13s</div>
<div style="left:905px;top:418px;width:1px;height:2.4px;background:#8a8a8a;opacity:0.57;"></div>
<div class="t" style="left:900.26px;top:409.2px;font-size:6px;color:#a8a8a8;transform:scaleX(0.8683) rotate(0.05deg);">14s</div>
<div style="left:945px;top:418px;width:1px;height:2.4px;background:#8a8a8a;opacity:0.57;"></div>
<div class="t" style="left:941.05px;top:409.2px;font-size:6px;color:#a8a8a8;transform:scaleX(0.8683) rotate(0.05deg);">15s</div>
<div style="left:986px;top:418px;width:1px;height:2.4px;background:#8a8a8a;opacity:0.57;"></div>
<div class="t" style="left:981.84px;top:409.2px;font-size:6px;color:#a8a8a8;transform:scaleX(0.8683) rotate(0.05deg);">16s</div>
<div style="left:331.4px;top:420.6px;width:660px;height:8.2px;background:#1a1a1a;"></div>
<div style="left:334px;top:421px;width:652.6px;height:7.4px;background:#5e5e5e;"></div>
<div style="left:334px;top:428.8px;width:652.6px;height:2px;background:#1a1a1a;"></div>
<div style="left:334.2px;top:429px;width:1.4px;height:1.4px;background:#1fd01f;"></div>
<div style="left:371.2px;top:429px;width:1.2px;height:1.4px;background:#1fd01f;"></div>
<div style="left:374.4px;top:429px;width:3.8px;height:1.4px;background:#1fd01f;"></div>
<div style="left:386.4px;top:429px;width:1.2px;height:1.4px;background:#1fd01f;"></div>
<div style="left:396px;top:429px;width:2.8px;height:1.4px;background:#1fd01f;"></div>
<div style="left:436.6px;top:429px;width:1.2px;height:1.4px;background:#1fd01f;"></div>
<div style="left:474px;top:429px;width:3.8px;height:1.4px;background:#1fd01f;"></div>
<div style="left:481px;top:429px;width:1.2px;height:1.4px;background:#1fd01f;"></div>
<svg style="left:0;top:0" width="1000" height="546" viewBox="0 0 1000 546"><defs><linearGradient id="selbar" x1="0" y1="0" x2="0" y2="1"><stop offset="0" stop-color="#a4a3ce"/><stop offset="0.5" stop-color="#9c9bc6"/><stop offset="1" stop-color="#8f8ebb"/></linearGradient><linearGradient id="nbar" x1="0" y1="0" x2="0" y2="1"><stop offset="0" stop-color="#7b7a8b"/><stop offset="1" stop-color="#727182"/></linearGradient><filter id="grain" x="0" y="0" width="100%" height="100%" color-interpolation-filters="sRGB"><feTurbulence type="fractalNoise" baseFrequency="0.9" numOctaves="2" seed="11"/><feColorMatrix type="matrix" values="0 0 0 0 1  0 0 0 0 1  0 0 0 0 1  3 0 0 0 -1.2"/></filter></defs><rect x="331.2" y="456.6" width="658.2" height="8.8" fill="#444444"/><rect x="334.0" y="430.2" width="652.6" height="35.2" fill="#3e3e44"/><rect x="334.0" y="455.8" width="652.6" height="1.2" fill="#64636e"/><rect x="334.0" y="430.7" width="652.6" height="7.65" fill="url(#nbar)"/><rect x="334.0" y="439.2" width="652.6" height="8" fill="url(#nbar)"/><rect x="334.0" y="448.05" width="652.6" height="8.05" fill="url(#nbar)"/><rect x="334.0" y="456.7" width="652.6" height="8.35" fill="url(#selbar)"/><rect x="334.0" y="456.7" width="652.6" height="8.35" filter="url(#grain)" opacity="0.13"/><rect x="331.2" y="465.6" width="658.2" height="70.6" fill="#2f2f2f"/><rect x="331.2" y="473.88" width="658.2" height="0.8" fill="#232323"/><rect x="331.2" y="482.78" width="658.2" height="0.8" fill="#232323"/><rect x="331.2" y="491.58" width="658.2" height="0.8" fill="#232323"/><rect x="331.2" y="500.48" width="658.2" height="0.8" fill="#232323"/><rect x="331.2" y="509.28" width="658.2" height="0.8" fill="#232323"/><rect x="331.2" y="518.18" width="658.2" height="0.8" fill="#232323"/><rect x="331.2" y="526.98" width="658.2" height="0.8" fill="#232323"/><rect x="331.2" y="535.88" width="658.2" height="0.8" fill="#232323"/></svg>
<svg style="left:0;top:0" width="1000" height="546" viewBox="0 0 1000 546"><path d="M333.800 405.800v4.400h-1.200l-1.400-2.200 1.400-2.200z" fill="#2d8ceb"/><path d="M986.600 405.800h1l1.400 2.200-1.400 2.200h-1z" fill="#2d8ceb"/><rect x="331.200" y="421" width="2.400" height="7.400" rx="0.8" fill="#2d8ceb"/><rect x="986.400" y="421" width="2.400" height="7.400" rx="0.8" fill="#2d8ceb"/><path d="M480.84 405.4v130.8" stroke="#4b86cc" stroke-width="0.8" opacity="0.8"/><path d="M477.64 413.600h6.400v3.400l-3.200 3-3.200-3z" fill="#2d8ceb"/><path d="M479.84 417.600h2" stroke="#1a3a60" stroke-width="0.5"/><path d="M480.84 467.4v5.200M479.54 467.4h2.600M479.54 472.6h2.600" stroke="#c8c8c8" stroke-width="0.8" fill="none"/><path d="M480.84 476.3v5.200M479.54 476.3h2.600M479.54 481.5h2.600" stroke="#c8c8c8" stroke-width="0.8" fill="none"/><path d="M480.84 502.8v5.200M479.54 502.8h2.600M479.54 508h2.600" stroke="#c8c8c8" stroke-width="0.8" fill="none"/><path d="M480.84 520.5v5.200M479.54 520.5h2.600M479.54 525.7h2.600" stroke="#c8c8c8" stroke-width="0.8" fill="none"/><path d="M480.84 529.4v5.200M479.54 529.4h2.600M479.54 534.6h2.600" stroke="#c8c8c8" stroke-width="0.8" fill="none"/><path d="M456.8 511.9l2.400 2.400-2.400 2.400-2.400-2.400z" fill="#b4b4b4"/><path d="M498.6 511.9l2.400 2.400-2.400 2.400-2.400-2.400z" fill="#b4b4b4"/><rect x="989.400" y="403" width="10" height="133" fill="#232323"/><path d="M992 421.400h6.400v3.600l-3.200 3-3.200-3z" fill="#b8b8b8"/><circle cx="994.600" cy="435" r="2.400" fill="none" stroke="#c0c0c0" stroke-width="0.7"/><path d="M991.400 434.800l3.200 1.800 3.600-3" stroke="#c0c0c0" stroke-width="0.7" fill="none"/><rect x="992" y="444.800" width="5.200" height="51" rx="2.600" fill="#333"/><path d="M343.600 541.400h26" stroke="#444" stroke-width="0.6"/><circle cx="346.200" cy="541.400" r="1.900" fill="#232323" stroke="#c8c8c8" stroke-width="0.8"/><path d="M375.600 543.200l2.400-3.400 1.400 1.600 1.400-2.400 2.600 4.200z" fill="#c0c0c0"/></svg>
<div style="left:480.4px;top:435.6px;width:93.6px;height:10px;background:#ffffff;border:1px solid #8a8a8a;box-shadow:1px 1px 1.5px rgba(0,0,0,0.55);"></div>
<div class="t" style="left:484.9px;top:435.8px;font-size:6.5px;color:#4a4a4a;transform:scaleX(0.9515) rotate(0.05deg);">Time Ruler (Click to set thumb)</div>
</div></body></html>
